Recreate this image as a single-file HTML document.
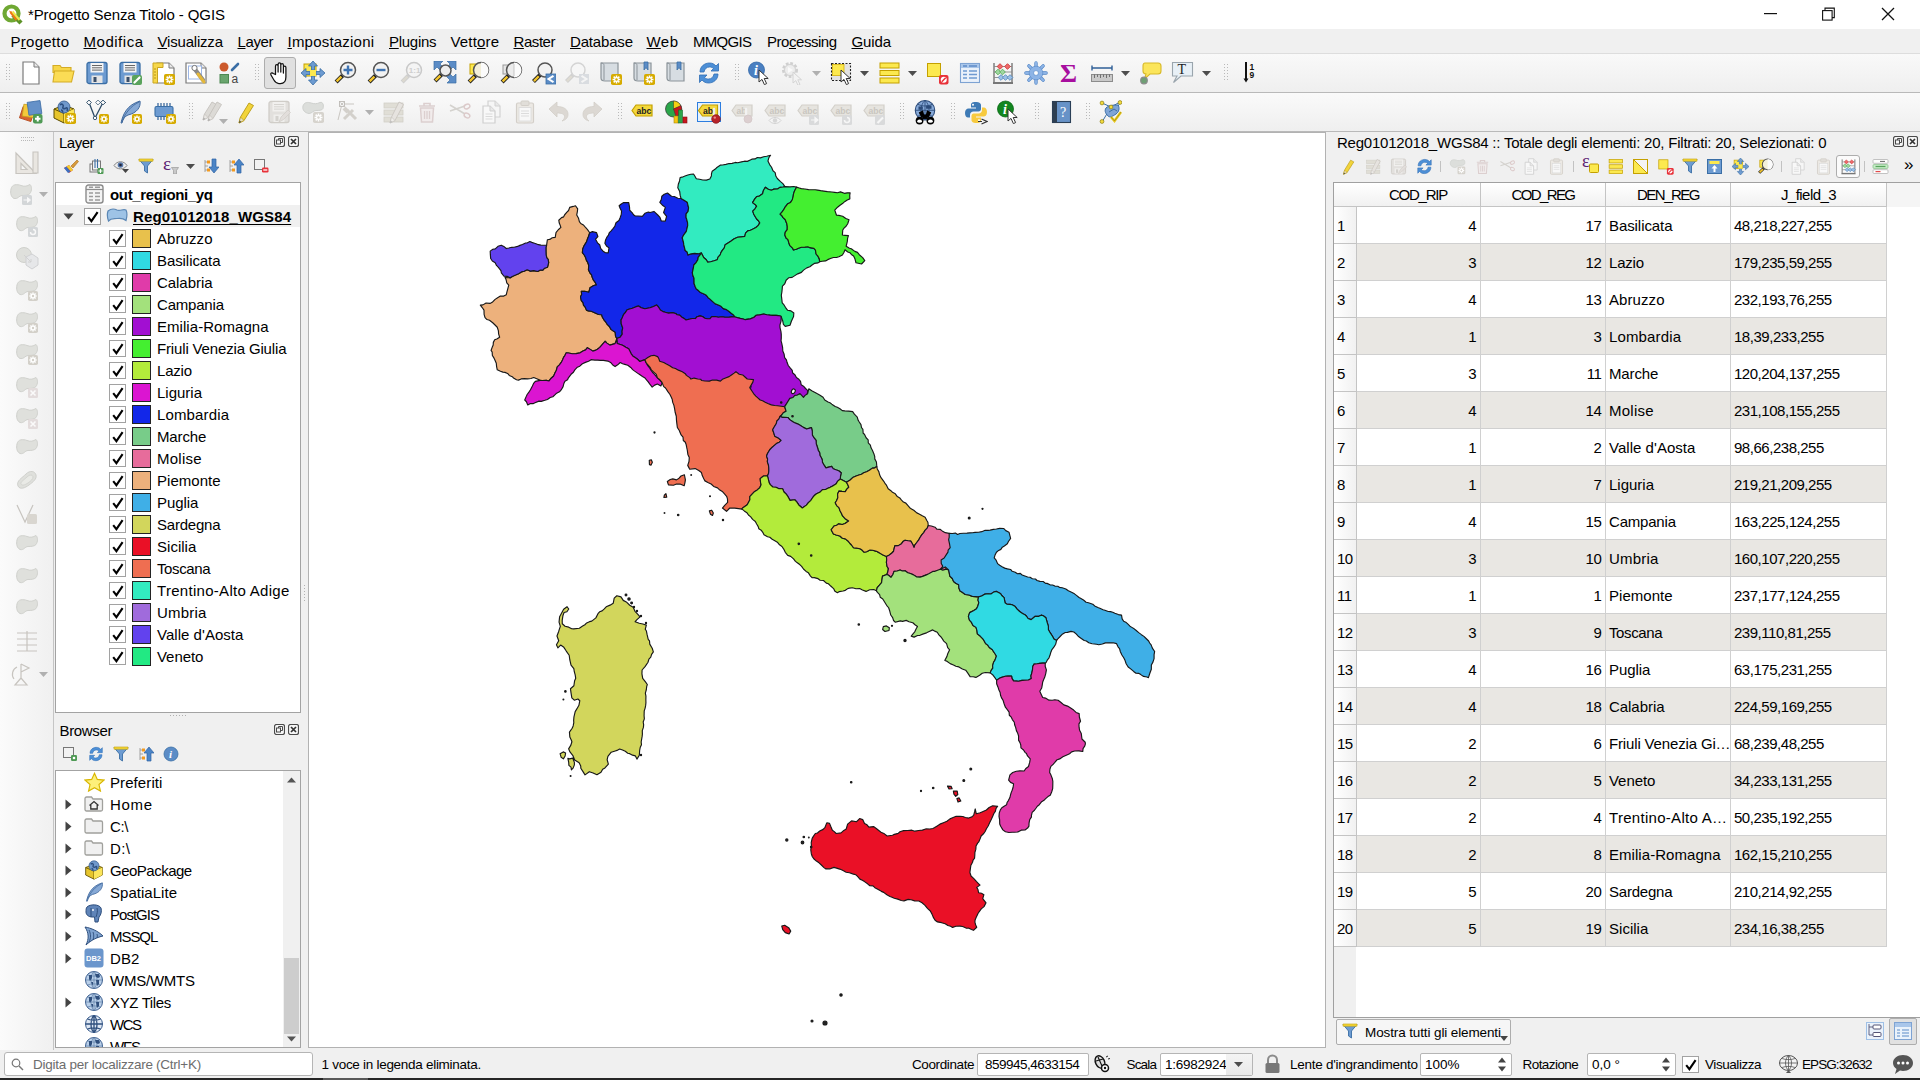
<!DOCTYPE html>
<html><head><meta charset="utf-8"><title>*Progetto Senza Titolo - QGIS</title>
<style>
*{box-sizing:border-box;margin:0;padding:0}
html,body{width:1920px;height:1080px;overflow:hidden;background:#f0f0f0;font-family:"Liberation Sans", sans-serif;font-size:15px;color:#000}
.a{position:absolute}
.t{position:absolute;white-space:nowrap;line-height:1}
#title{left:0;top:0;width:1920px;height:29px;background:#fff}
#menubar{left:0;top:29px;width:1920px;height:24px;background:#f0f0f0}
#menubar span{position:absolute;top:4px;font-size:15px;line-height:17px;white-space:nowrap}
#menubar u{text-decoration:underline;text-underline-offset:1px}
.hl{position:absolute;height:1px;background:#c9c9c9}
.vl{position:absolute;width:1px;background:#c9c9c9}
.tree{position:absolute;background:#fff;border:1px solid #a3a3a3}
.lrow{position:absolute;left:1px;height:22px;width:244px;}
.cb{position:absolute;width:17px;height:17px;border:1px solid #a2a2a2;background:#fff}
.cb svg{position:absolute;left:0.5px;top:0.5px}
.sw{position:absolute;width:19px;height:19px;border:1px solid #232323}
.lt{position:absolute;top:1px;font-size:15px;line-height:22px;white-space:nowrap}
.th{position:absolute;top:0;height:24px;font-size:15px;line-height:24px;text-align:center;border-right:1px solid #c4c4c4;border-bottom:1px solid #c4c4c4;background:linear-gradient(#fff,#f1f1f1)}
.tr{position:absolute;left:0;height:37px;width:553px}
.tr div{position:absolute;top:0;height:37px;font-size:15px;line-height:37px;white-space:nowrap;overflow:hidden;border-right:1px solid #d0d0d0;border-bottom:1px solid #d0d0d0}
.tr .n{left:0;width:23px;background:linear-gradient(90deg,#fff,#f1f1f1);padding-left:3px;border-right:1px solid #c4c4c4;border-bottom:1px solid #c4c4c4}
.inp{position:absolute;background:#fff;border:1px solid #b5b5b5;border-radius:2px;font-size:13.5px;line-height:20px;white-space:nowrap}
.sb{font-size:13.5px}
</style></head><body>
<div id="title" class="a"><svg class="a" style="left:2px;top:4px" width="21" height="21" viewBox="0 0 21 21"><circle cx="9.500" cy="9.500" r="7" fill="none" stroke="#6fa833" stroke-width="4.200"/><path d="M11 11l8 8" stroke="#5c9227" stroke-width="4.500"/><path d="M8.500 8l6 8" stroke="#ee7913" stroke-width="2.200"/><path d="M10.500 7.500l7 8.500" stroke="#f0e64a" stroke-width="2"/><path d="M7 6.500l3 1.500-1.500 1.500z" fill="#ee7913"/></svg><span class="t" style="left:28px;top:6px;font-size:15px;line-height:17px;letter-spacing:-0.111px;">*Progetto Senza Titolo - QGIS</span><svg class="a" style="left:1764px;top:13px" width="13" height="2"><rect width="13" height="1.200" fill="#111"/></svg><svg class="a" style="left:1822px;top:7px" width="13" height="14" viewBox="0 0 13 14"><rect x=".600" y="3.600" width="9.500" height="9.500" fill="none" stroke="#111" stroke-width="1.100"/><path d="M3 3.500V1.100h9.300v9.500H10" fill="none" stroke="#111" stroke-width="1.100"/></svg><svg class="a" style="left:1881px;top:7px" width="14" height="14" viewBox="0 0 14 14"><path d="M1 1l12 12M13 1L1 13" stroke="#111" stroke-width="1.300"/></svg></div>
<div id="menubar" class="a"><span style="left:10.5px;letter-spacing:0.257px">P<u>r</u>ogetto</span><span style="left:83.5px;letter-spacing:0.521px"><u>M</u>odifica</span><span style="left:157.5px;letter-spacing:-0.195px"><u>V</u>isualizza</span><span style="left:237.5px;letter-spacing:-0.38px"><u>L</u>ayer</span><span style="left:287.5px;letter-spacing:0.209px"><u>I</u>mpostazioni</span><span style="left:389px;letter-spacing:-0.283px"><u>P</u>lugins</span><span style="left:450.5px;letter-spacing:0.161px">Vett<u>o</u>re</span><span style="left:513.5px;letter-spacing:-0.436px"><u>R</u>aster</span><span style="left:570px;letter-spacing:-0.173px"><u>D</u>atabase</span><span style="left:646.5px;letter-spacing:0.464px"><u>W</u>eb</span><span style="left:693px;letter-spacing:-0.699px">MMQGIS</span><span style="left:767px;letter-spacing:-0.467px">Pro<u>c</u>essing</span><span style="left:851.5px;letter-spacing:-0.132px"><u>G</u>uida</span></div>
<!-- toolbars -->
<div class="a" style="left:0;top:53px;width:1920px;height:40px;background:linear-gradient(#f9f9f9,#efefef);border-top:1px solid #dddddd;border-bottom:1px solid #b9b9b9"></div>
<div class="a" style="left:0;top:93px;width:1920px;height:39px;background:linear-gradient(#fafafa,#efefef);border-bottom:1px solid #b9b9b9"></div>
<svg class="a" style="left:6px;top:64px" width="5" height="18"><rect x="0" y="0" width="1" height="1" fill="#b9b9b9"/><rect x="3" y="0" width="1" height="1" fill="#b9b9b9"/><rect x="0" y="3" width="1" height="1" fill="#b9b9b9"/><rect x="3" y="3" width="1" height="1" fill="#b9b9b9"/><rect x="0" y="6" width="1" height="1" fill="#b9b9b9"/><rect x="3" y="6" width="1" height="1" fill="#b9b9b9"/><rect x="0" y="9" width="1" height="1" fill="#b9b9b9"/><rect x="3" y="9" width="1" height="1" fill="#b9b9b9"/><rect x="0" y="12" width="1" height="1" fill="#b9b9b9"/><rect x="3" y="12" width="1" height="1" fill="#b9b9b9"/><rect x="0" y="15" width="1" height="1" fill="#b9b9b9"/><rect x="3" y="15" width="1" height="1" fill="#b9b9b9"/></svg>
<svg class="a" style="left:6px;top:103px" width="5" height="18"><rect x="0" y="0" width="1" height="1" fill="#b9b9b9"/><rect x="3" y="0" width="1" height="1" fill="#b9b9b9"/><rect x="0" y="3" width="1" height="1" fill="#b9b9b9"/><rect x="3" y="3" width="1" height="1" fill="#b9b9b9"/><rect x="0" y="6" width="1" height="1" fill="#b9b9b9"/><rect x="3" y="6" width="1" height="1" fill="#b9b9b9"/><rect x="0" y="9" width="1" height="1" fill="#b9b9b9"/><rect x="3" y="9" width="1" height="1" fill="#b9b9b9"/><rect x="0" y="12" width="1" height="1" fill="#b9b9b9"/><rect x="3" y="12" width="1" height="1" fill="#b9b9b9"/><rect x="0" y="15" width="1" height="1" fill="#b9b9b9"/><rect x="3" y="15" width="1" height="1" fill="#b9b9b9"/></svg>
<svg class="a" style="left:19px;top:61px" width="24" height="24" viewBox="0 0 24 24"><path d="M4 1h11l5 5v17h-16z" fill="#fff" stroke="#7b7b7b" stroke-width="1.2"/><path d="M15 1v5h5" fill="#e8e8e8" stroke="#7b7b7b" stroke-width="1"/></svg>
<svg class="a" style="left:51px;top:61px" width="24" height="24" viewBox="0 0 24 24"><path d="M2 4.5h7l1.5 2H20v5H2z" fill="#f7d648" stroke="#d4ac25" stroke-width="1.1"/><path d="M3.5 10h19.5l-2.5 11H2z" fill="#fbdc55" stroke="#d4ac25" stroke-width="1.1"/></svg>
<svg class="a" style="left:85px;top:61px" width="24" height="24" viewBox="0 0 24 24"><rect x="2" y="1.5" width="20" height="21" rx="2" fill="#6d9bd1" stroke="#3a6ea5" stroke-width="1.3"/><rect x="5.5" y="2" width="13" height="9.5" fill="#f4f4f4"/><path d="M7 4.5h10M7 6.8h10M7 9.1h10" stroke="#666" stroke-width="1"/><rect x="6.5" y="14.5" width="11" height="7.5" fill="#e4e4e4"/><rect x="8.5" y="16" width="3" height="5" fill="#3a4f6a"/></svg>
<svg class="a" style="left:118px;top:61px" width="24" height="24" viewBox="0 0 24 24"><rect x="2" y="1.5" width="20" height="21" rx="2" fill="#6d9bd1" stroke="#3a6ea5" stroke-width="1.3"/><rect x="5.5" y="2" width="13" height="9.5" fill="#f4f4f4"/><path d="M7 4.5h10M7 6.8h10M7 9.1h10" stroke="#666" stroke-width="1"/><rect x="6.5" y="14.5" width="11" height="7.5" fill="#e4e4e4"/><rect x="8.5" y="16" width="3" height="5" fill="#3a4f6a"/><rect x="14" y="14" width="10" height="10" rx="2" fill="#5aa35c"/><path d="M16.5 21.5l5-5" stroke="#fff" stroke-width="2.2" stroke-linecap="round"/></svg>
<svg class="a" style="left:151px;top:61px" width="24" height="24" viewBox="0 0 24 24"><path d="M6 2h12l5 5v15h-17z" fill="#fff" stroke="#7b7b7b" stroke-width="1.2"/><path d="M18 2v5h5" fill="#e8e8e8" stroke="#7b7b7b" stroke-width="1"/><path d="M2 2h10v4.5H6.5V22H2z" fill="#f7d84a" stroke="#c9a51e" stroke-width="1"/><path d="M3 8h2M3 11h2M3 14h2M3 17h2" stroke="#a8860f" stroke-width=".8"/><rect x="13" y="13" width="11" height="11" rx="1.8" fill="#d6ab00"/><path d="M14.54 18.5H22.46M18.5 14.54V22.46M15.6488 15.6488L21.3512 21.3512M21.3512 15.6488L15.6488 21.3512" stroke="#fff" stroke-width="1.5"/><circle cx="18.5" cy="18.5" r="1.2" fill="#d6ab00"/></svg>
<svg class="a" style="left:184px;top:61px" width="24" height="24" viewBox="0 0 24 24"><path d="M2 2h15l5 5v15h-20z" fill="#fff" stroke="#7b7b7b" stroke-width="1.2"/><path d="M17 2v5h5" fill="#e8e8e8" stroke="#7b7b7b" stroke-width="1"/><rect x="4.5" y="5" width="13" height="13" fill="#fff" stroke="#9cb6e6" stroke-width="1"/><path d="M10 7l9 12" stroke="#8a8a8a" stroke-width="4.2" stroke-linecap="round"/><path d="M14 13l6 8" stroke="#e4b83a" stroke-width="3" stroke-linecap="round"/><circle cx="10.5" cy="7" r="2.6" fill="#fff" stroke="#777" stroke-width="1"/></svg>
<svg class="a" style="left:217px;top:61px" width="24" height="24" viewBox="0 0 24 24"><circle cx="7" cy="6" r="4.5" fill="#cc5a2c"/><rect x="3" y="13.5" width="8.5" height="8.5" fill="#6aa56e" stroke="#4d8852" stroke-width="1"/><path d="M15 9l6-6" stroke="#3a6ea5" stroke-width="2.6" stroke-linecap="round"/><text x="14.5" y="22" font-family="Liberation Sans,sans-serif" font-size="12" fill="#444">a</text></svg>
<svg class="a" style="left:255px;top:64px" width="5" height="18"><rect x="0" y="0" width="1" height="1" fill="#b9b9b9"/><rect x="3" y="0" width="1" height="1" fill="#b9b9b9"/><rect x="0" y="3" width="1" height="1" fill="#b9b9b9"/><rect x="3" y="3" width="1" height="1" fill="#b9b9b9"/><rect x="0" y="6" width="1" height="1" fill="#b9b9b9"/><rect x="3" y="6" width="1" height="1" fill="#b9b9b9"/><rect x="0" y="9" width="1" height="1" fill="#b9b9b9"/><rect x="3" y="9" width="1" height="1" fill="#b9b9b9"/><rect x="0" y="12" width="1" height="1" fill="#b9b9b9"/><rect x="3" y="12" width="1" height="1" fill="#b9b9b9"/><rect x="0" y="15" width="1" height="1" fill="#b9b9b9"/><rect x="3" y="15" width="1" height="1" fill="#b9b9b9"/></svg>
<div class="a" style="left:264px;top:57px;width:32px;height:32px;background:#e0e0e0;border:1px solid #adadad;border-radius:3px"></div>
<svg class="a" style="left:268px;top:61px" width="24" height="24" viewBox="0 0 24 24"><path d="M7.5 13.5V5.2c0-2 2.6-2 2.6 0V11 3.4c0-2 2.7-2 2.7 0V11 4.2c0-2 2.6-2 2.6 0V12 6.5c0-1.9 2.5-1.9 2.5 0v9.5c0 3.5-1.800 6.500-5.500 6.500h-1.500c-2.600 0-3.800-1.500-5-3.500L3 14c-1-1.700 1-2.900 2.200-1.500z" fill="#fff" stroke="#111" stroke-width="1.25" stroke-linejoin="round"/></svg>
<svg class="a" style="left:301px;top:61px" width="24" height="24" viewBox="0 0 24 24"><rect x="3" y="3" width="12" height="12" fill="#fce94f" stroke="#c4a000"/><path d="M12 0l4.5 5h-3v4h-3V5h-3zM12 24l4.500-5h-3v-4h-3v4h-3zM0 12l5-4.500v3h4v3H5v3zM24 12l-5-4.500v3h-4v3h4v3z" fill="#6d9bd1" stroke="#3a6ea5" stroke-width=".8"/><rect x="9" y="9" width="6" height="6" fill="#fce94f"/></svg>
<svg class="a" style="left:334px;top:61px" width="24" height="24" viewBox="0 0 24 24"><path d="M8.600000000000001 14.399999999999999L2.1000000000000014 20.9" stroke="#222" stroke-width="4.2" stroke-linecap="butt"/><path d="M7.400000000000001 15.599999999999998L2.6000000000000014 20.4" stroke="#f3c52d" stroke-width="2.4"/><circle cx="14" cy="9" r="7.5" fill="#f2f2f2" stroke="#555" stroke-width="1.5"/><path d="M9.500 9h9M14 4.500v9" stroke="#3f74b3" stroke-width="2.4"/></svg>
<svg class="a" style="left:367px;top:61px" width="24" height="24" viewBox="0 0 24 24"><path d="M8.600000000000001 14.399999999999999L2.1000000000000014 20.9" stroke="#222" stroke-width="4.2" stroke-linecap="butt"/><path d="M7.400000000000001 15.599999999999998L2.6000000000000014 20.4" stroke="#f3c52d" stroke-width="2.4"/><circle cx="14" cy="9" r="7.5" fill="#f2f2f2" stroke="#555" stroke-width="1.5"/><path d="M9.500 9h9" stroke="#3f74b3" stroke-width="2.4"/></svg>
<svg class="a" style="left:400px;top:61px" width="24" height="24" viewBox="0 0 24 24"><path d="M8.600000000000001 14.399999999999999L2.1000000000000014 20.9" stroke="#cfcfcf" stroke-width="4.2" stroke-linecap="butt"/><path d="M7.400000000000001 15.599999999999998L2.6000000000000014 20.4" stroke="#dcd9d0" stroke-width="2.4"/><circle cx="14" cy="9" r="7.5" fill="#f4f4f4" stroke="#c9c9c9" stroke-width="1.5"/><text x="8.800" y="12" font-family="Liberation Sans,sans-serif" font-weight="bold" font-size="8" fill="#cfcfcf">1:1</text></svg>
<svg class="a" style="left:433px;top:61px" width="24" height="24" viewBox="0 0 24 24"><path d="M10 0H1v9l3-3 3.500 3.500 3-3L7 3zM14 0h9v9l-3-3-3.500 3.500-3-3L17 3zM23 13v9h-9l3-3-3.500-3.500 3-3L20 16z" fill="#5b8cc6" stroke="#3a6ea5" stroke-width=".7"/><path d="M8.54 13.46L2.039999999999999 19.96" stroke="#222" stroke-width="4.2" stroke-linecap="butt"/><path d="M7.339999999999999 14.66L2.539999999999999 19.46" stroke="#f3c52d" stroke-width="2.4"/><circle cx="12.5" cy="9.5" r="5.5" fill="#ededed" stroke="#555" stroke-width="1.5"/></svg>
<svg class="a" style="left:466px;top:61px" width="24" height="24" viewBox="0 0 24 24"><rect x="4" y="3" width="9" height="10" fill="#fce94f" stroke="#c4a000"/><path d="M9.600000000000001 14.399999999999999L3.1000000000000014 20.9" stroke="#222" stroke-width="4.2" stroke-linecap="butt"/><path d="M8.400000000000002 15.599999999999998L3.6000000000000014 20.4" stroke="#f3c52d" stroke-width="2.4"/><circle cx="15" cy="9" r="7.5" fill="#f3efd9" stroke="#555" stroke-width="1.5"/><path d="M15 1.500a7.500 7.500 0 0 1 0 15z" fill="#fbfbfb"/></svg>
<svg class="a" style="left:499px;top:61px" width="24" height="24" viewBox="0 0 24 24"><rect x="4" y="4" width="9" height="9" fill="#e6e6e6" stroke="#999"/><path d="M9.600000000000001 14.399999999999999L3.1000000000000014 20.9" stroke="#222" stroke-width="4.2" stroke-linecap="butt"/><path d="M8.400000000000002 15.599999999999998L3.6000000000000014 20.4" stroke="#f3c52d" stroke-width="2.4"/><circle cx="15" cy="9" r="7.5" fill="#ececec" stroke="#555" stroke-width="1.5"/><path d="M15 1.500a7.500 7.500 0 0 1 0 15z" fill="#fbfbfb"/><path d="M15 3v12" stroke="#bbb" stroke-width=".8"/></svg>
<svg class="a" style="left:532px;top:61px" width="24" height="24" viewBox="0 0 24 24"><path d="M7.96 14.04L1.46 20.54" stroke="#222" stroke-width="4.2" stroke-linecap="butt"/><path d="M6.76 15.239999999999998L1.96 20.04" stroke="#f3c52d" stroke-width="2.4"/><circle cx="13" cy="9" r="7" fill="#f2f2f2" stroke="#555" stroke-width="1.5"/><rect x="14" y="13" width="10" height="10" fill="#5b8cc6" stroke="#3a6ea5" stroke-width=".8"/><path d="M21.500 14.800l-5 3.200 5 3.200" fill="none" stroke="#fff" stroke-width="2"/></svg>
<svg class="a" style="left:565px;top:61px" width="24" height="24" viewBox="0 0 24 24"><path d="M7.96 14.04L1.46 20.54" stroke="#d0d0d0" stroke-width="4.2" stroke-linecap="butt"/><path d="M6.76 15.239999999999998L1.96 20.04" stroke="#dedbd2" stroke-width="2.4"/><circle cx="13" cy="9" r="7" fill="#f6f6f6" stroke="#d4d4d4" stroke-width="1.5"/><rect x="14" y="13" width="10" height="10" fill="#d9dce0"/><path d="M16.500 14.800l5 3.200-5 3.200" fill="none" stroke="#f4f4f4" stroke-width="2"/></svg>
<svg class="a" style="left:598px;top:61px" width="24" height="24" viewBox="0 0 24 24"><path d="M3 2h17v18H7c-2.5 0-4-1-4-3z" fill="#d7dde2" stroke="#8b9399" stroke-width="1.2"/><path d="M3 2c2 0 3 .8 3 2.5V19" fill="none" stroke="#8b9399" stroke-width="1"/><rect x="13" y="13" width="11" height="11" rx="1.8" fill="#d6ab00"/><path d="M14.54 18.5H22.46M18.5 14.54V22.46M15.6488 15.6488L21.3512 21.3512M21.3512 15.6488L15.6488 21.3512" stroke="#fff" stroke-width="1.5"/><circle cx="18.5" cy="18.5" r="1.2" fill="#d6ab00"/></svg>
<svg class="a" style="left:631px;top:61px" width="24" height="24" viewBox="0 0 24 24"><path d="M3 2h17v18H7c-2.5 0-4-1-4-3z" fill="#d7dde2" stroke="#8b9399" stroke-width="1.2"/><path d="M3 2c2 0 3 .8 3 2.5V19" fill="none" stroke="#8b9399" stroke-width="1"/><path d="M13 1h4v8l-2-2.500-2 2.500z" fill="#5b8cc6" stroke="#3a6ea5" stroke-width=".8"/><rect x="13" y="13" width="11" height="11" rx="1.8" fill="#d6ab00"/><path d="M14.54 18.5H22.46M18.5 14.54V22.46M15.6488 15.6488L21.3512 21.3512M21.3512 15.6488L15.6488 21.3512" stroke="#fff" stroke-width="1.5"/><circle cx="18.5" cy="18.5" r="1.2" fill="#d6ab00"/></svg>
<svg class="a" style="left:664px;top:61px" width="24" height="24" viewBox="0 0 24 24"><path d="M3 2h17v18H7c-2.5 0-4-1-4-3z" fill="#d7dde2" stroke="#8b9399" stroke-width="1.2"/><path d="M3 2c2 0 3 .8 3 2.5V19" fill="none" stroke="#8b9399" stroke-width="1"/><path d="M13 1h4v8l-2-2.500-2 2.500z" fill="#5b8cc6" stroke="#3a6ea5" stroke-width=".8"/></svg>
<svg class="a" style="left:697px;top:61px" width="24" height="24" viewBox="0 0 24 24"><path d="M3 11C3 5 8 2 12.500 2c3 0 5 1.300 6.500 3l2.500-2.500V10h-7.500l2.500-2.500C15.500 6.500 14 6 12.500 6 9.500 6 7.500 8 7 11z" fill="#4d8fd6" stroke="#2f6db5" stroke-width=".8"/><path d="M21 13c0 6-5 9-9.500 9-3 0-5-1.300-6.500-3L2.500 21.500V14H10l-2.500 2.500C8.500 17.500 10 18 11.500 18c3 0 5-2 5.500-5z" fill="#4d8fd6" stroke="#2f6db5" stroke-width=".8"/></svg>
<svg class="a" style="left:735px;top:64px" width="5" height="18"><rect x="0" y="0" width="1" height="1" fill="#b9b9b9"/><rect x="3" y="0" width="1" height="1" fill="#b9b9b9"/><rect x="0" y="3" width="1" height="1" fill="#b9b9b9"/><rect x="3" y="3" width="1" height="1" fill="#b9b9b9"/><rect x="0" y="6" width="1" height="1" fill="#b9b9b9"/><rect x="3" y="6" width="1" height="1" fill="#b9b9b9"/><rect x="0" y="9" width="1" height="1" fill="#b9b9b9"/><rect x="3" y="9" width="1" height="1" fill="#b9b9b9"/><rect x="0" y="12" width="1" height="1" fill="#b9b9b9"/><rect x="3" y="12" width="1" height="1" fill="#b9b9b9"/><rect x="0" y="15" width="1" height="1" fill="#b9b9b9"/><rect x="3" y="15" width="1" height="1" fill="#b9b9b9"/></svg>
<svg class="a" style="left:747px;top:61px" width="24" height="24" viewBox="0 0 24 24"><circle cx="9.500" cy="9" r="8" fill="#4a7fc1" stroke="#356aa8" stroke-width=".8"/><text x="7" y="14" font-family="Liberation Serif,serif" font-style="italic" font-weight="bold" font-size="14" fill="#fff">i</text><path transform="translate(12,9) scale(1.0)" d="M0 0v12l3-2.6 2.4 5.2 2.2-1-2.4-5.1h4z" fill="#fff" stroke="#333" stroke-width="1"/></svg>
<svg class="a" style="left:780px;top:61px" width="24" height="24" viewBox="0 0 24 24"><circle cx="10" cy="9" r="6.500" fill="#e9e9e9" stroke="#cfcfcf" stroke-width="3" stroke-dasharray="2.600 1.700"/><circle cx="10" cy="9" r="5.500" fill="#ededed" stroke="#d2d2d2"/><path d="M8 6l5 3-5 3z" fill="#fafafa"/><path transform="translate(13,11)" d="M0 0v11l2.800-2.400 2.200 4.800 2-.900-2.200-4.700h3.700z" fill="#f3f3f3" stroke="#d4d4d4" stroke-width="1"/></svg>
<svg class="a" style="left:829px;top:61px" width="24" height="24" viewBox="0 0 24 24"><rect x="2.500" y="2.500" width="19" height="17" fill="#e3e3e3" stroke="#222" stroke-width="1.100" stroke-dasharray="2 1.500"/><rect x="3.500" y="3.500" width="11.500" height="11" fill="#fce94f" stroke="#d4b106" stroke-width=".8"/><path transform="translate(12,9) scale(1.0)" d="M0 0v12l3-2.6 2.4 5.2 2.2-1-2.4-5.1h4z" fill="#fff" stroke="#333" stroke-width="1"/></svg>
<svg class="a" style="left:877px;top:61px" width="24" height="24" viewBox="0 0 24 24"><rect x="3" y="2" width="19" height="5" fill="#fce94f" stroke="#c4a000"/><rect x="3" y="9.500" width="19" height="5" fill="#fce94f" stroke="#c4a000"/><rect x="3" y="17" width="19" height="5" fill="#fce94f" stroke="#c4a000"/></svg>
<svg class="a" style="left:925px;top:61px" width="24" height="24" viewBox="0 0 24 24"><rect x="2.500" y="2.500" width="13" height="13" fill="#fce94f" stroke="#c4a000"/><rect x="14" y="14" width="9.500" height="9.500" rx="2" fill="#e8323a"/><circle cx="18.750" cy="18.750" r="3" fill="#fff"/><path d="M16.800 20.700l3.900-3.900" stroke="#e8323a" stroke-width="1.500"/></svg>
<svg class="a" style="left:958px;top:61px" width="24" height="24" viewBox="0 0 24 24"><rect x="2.500" y="2.500" width="19" height="19" fill="#eaf1fa" stroke="#7ea3d3" stroke-width="1.100"/><rect x="3" y="3" width="18" height="4" fill="#a9c6ea"/><path d="M5 5h4M11 5h8" stroke="#5d8bc7" stroke-width="1.300"/><path d="M5 10h4M11 10h8M5 13.500h4M11 13.500h8M5 17h4M11 17h8" stroke="#6f9ad1" stroke-width="1.300"/></svg>
<svg class="a" style="left:991px;top:61px" width="24" height="24" viewBox="0 0 24 24"><path d="M3 2v19M21 2v19" stroke="#777" stroke-width="1.400"/><path d="M2 22h20" stroke="#777" stroke-width="2"/><path d="M3 5.500h18M3 11h18M3 16.500h18" stroke="#888" stroke-width=".9"/><rect x="7" y="3.5" width="4" height="4" transform="rotate(45 9 5.5)" fill="#ee6a6a" stroke="#c33" stroke-width=".8"/><rect x="14.5" y="3.5" width="4" height="4" transform="rotate(45 16.5 5.5)" fill="#ee6a6a" stroke="#c33" stroke-width=".8"/><rect x="5" y="9" width="4" height="4" transform="rotate(45 7 11)" fill="#9fd7a0" stroke="#5a5" stroke-width=".8"/><rect x="9.5" y="9" width="4" height="4" transform="rotate(45 11.5 11)" fill="#9fd7a0" stroke="#5a5" stroke-width=".8"/><rect x="8" y="14.5" width="4" height="4" transform="rotate(45 10 16.5)" fill="#9cc0e6" stroke="#58b" stroke-width=".8"/><rect x="12.5" y="14.5" width="4" height="4" transform="rotate(45 14.5 16.5)" fill="#9cc0e6" stroke="#58b" stroke-width=".8"/><rect x="17" y="14.5" width="4" height="4" transform="rotate(45 19 16.5)" fill="#9cc0e6" stroke="#58b" stroke-width=".8"/></svg>
<svg class="a" style="left:1024px;top:61px" width="24" height="24" viewBox="0 0 24 24"><path d="M18.05 12.00L22.12 12.00" stroke="#4f83c4" stroke-width="3.30" stroke-linecap="round"/><path d="M16.28 16.28L19.16 19.16" stroke="#4f83c4" stroke-width="3.30" stroke-linecap="round"/><path d="M12.00 18.05L12.00 22.12" stroke="#4f83c4" stroke-width="3.30" stroke-linecap="round"/><path d="M7.72 16.28L4.84 19.16" stroke="#4f83c4" stroke-width="3.30" stroke-linecap="round"/><path d="M5.95 12.00L1.88 12.00" stroke="#4f83c4" stroke-width="3.30" stroke-linecap="round"/><path d="M7.72 7.72L4.84 4.84" stroke="#4f83c4" stroke-width="3.30" stroke-linecap="round"/><path d="M12.00 5.95L12.00 1.88" stroke="#4f83c4" stroke-width="3.30" stroke-linecap="round"/><path d="M16.28 7.72L19.16 4.84" stroke="#4f83c4" stroke-width="3.30" stroke-linecap="round"/><path d="M18.05 12.00L22.12 12.00" stroke="#8db4e6" stroke-width="2.10" stroke-linecap="round"/><path d="M16.28 16.28L19.16 19.16" stroke="#8db4e6" stroke-width="2.10" stroke-linecap="round"/><path d="M12.00 18.05L12.00 22.12" stroke="#8db4e6" stroke-width="2.10" stroke-linecap="round"/><path d="M7.72 16.28L4.84 19.16" stroke="#8db4e6" stroke-width="2.10" stroke-linecap="round"/><path d="M5.95 12.00L1.88 12.00" stroke="#8db4e6" stroke-width="2.10" stroke-linecap="round"/><path d="M7.72 7.72L4.84 4.84" stroke="#8db4e6" stroke-width="2.10" stroke-linecap="round"/><path d="M12.00 5.95L12.00 1.88" stroke="#8db4e6" stroke-width="2.10" stroke-linecap="round"/><path d="M16.28 7.72L19.16 4.84" stroke="#8db4e6" stroke-width="2.10" stroke-linecap="round"/><circle cx="12" cy="12" r="6.82" fill="#8db4e6" stroke="#4f83c4" stroke-width=".6"/><circle cx="12" cy="12" r="6.22" fill="#8db4e6"/><circle cx="12" cy="12" r="2.42" fill="#fff" stroke="#4f83c4" stroke-width=".6"/></svg>
<svg class="a" style="left:1057px;top:61px" width="24" height="24" viewBox="0 0 24 24"><text x="3" y="21" font-family="Liberation Serif,serif" font-weight="bold" font-size="26" fill="#a70e9e">Σ</text></svg>
<svg class="a" style="left:1090px;top:61px" width="24" height="24" viewBox="0 0 24 24"><path d="M2 7h20M2 4.500v5M22 4.500v5" stroke="#2f5f97" stroke-width="1.400"/><rect x="1.500" y="13.500" width="21" height="7" fill="#c9c9c9" stroke="#8c8c8c"/><path d="M4.500 13.500v3.500M7.500 13.500v2.500M10.500 13.500v3.500M13.500 13.500v2.500M16.500 13.500v3.500M19.500 13.500v2.500" stroke="#666" stroke-width=".9"/></svg>
<svg class="a" style="left:1138px;top:61px" width="24" height="24" viewBox="0 0 24 24"><path d="M7 2h13c2 0 3 1 3 3v5c0 2-1 3-3 3h-8l-5.500 5 1.500-5c-2-.200-3-1.200-3-3V5c0-2 1-3 2-3z" fill="#fbe55b" stroke="#d8b928" stroke-width="1.100"/><circle cx="6" cy="19.500" r="3.300" fill="#6e9f74" stroke="#8b8b8b" stroke-width="1.200"/></svg>
<svg class="a" style="left:1171px;top:61px" width="24" height="24" viewBox="0 0 24 24"><path d="M1.500 1.500h20v13.500H10L2.500 21.500 6 15H1.500z" fill="#e8f0f6" stroke="#9aa5ad" stroke-width="1.100"/><text x="6.500" y="12.800" font-family="Liberation Serif,serif" font-size="14" fill="#222">T</text></svg>
<svg class="a" style="left:811.5px;top:71px" width="9" height="5" viewBox="0 0 9 5"><path d="M0 0h9L4.500 5z" fill="#b0b0b0"/></svg>
<svg class="a" style="left:859.5px;top:71px" width="9" height="5" viewBox="0 0 9 5"><path d="M0 0h9L4.500 5z" fill="#4d4d4d"/></svg>
<svg class="a" style="left:907.5px;top:71px" width="9" height="5" viewBox="0 0 9 5"><path d="M0 0h9L4.500 5z" fill="#4d4d4d"/></svg>
<svg class="a" style="left:1120.5px;top:71px" width="9" height="5" viewBox="0 0 9 5"><path d="M0 0h9L4.500 5z" fill="#4d4d4d"/></svg>
<svg class="a" style="left:1201.5px;top:71px" width="9" height="5" viewBox="0 0 9 5"><path d="M0 0h9L4.500 5z" fill="#4d4d4d"/></svg>
<svg class="a" style="left:1224px;top:64px" width="5" height="18"><rect x="0" y="0" width="1" height="1" fill="#b9b9b9"/><rect x="3" y="0" width="1" height="1" fill="#b9b9b9"/><rect x="0" y="3" width="1" height="1" fill="#b9b9b9"/><rect x="3" y="3" width="1" height="1" fill="#b9b9b9"/><rect x="0" y="6" width="1" height="1" fill="#b9b9b9"/><rect x="3" y="6" width="1" height="1" fill="#b9b9b9"/><rect x="0" y="9" width="1" height="1" fill="#b9b9b9"/><rect x="3" y="9" width="1" height="1" fill="#b9b9b9"/><rect x="0" y="12" width="1" height="1" fill="#b9b9b9"/><rect x="3" y="12" width="1" height="1" fill="#b9b9b9"/><rect x="0" y="15" width="1" height="1" fill="#b9b9b9"/><rect x="3" y="15" width="1" height="1" fill="#b9b9b9"/></svg>
<svg class="a" style="left:1239px;top:61px" width="24" height="24" viewBox="0 0 24 24"><path d="M7 1v18" stroke="#111" stroke-width="2"/><path d="M4.500 17.500h5L7 21.500z" fill="#111"/><text x="10.500" y="9" font-family="Liberation Sans,sans-serif" font-weight="bold" font-size="8.500" fill="#111">1</text><text x="10.500" y="17" font-family="Liberation Sans,sans-serif" font-weight="bold" font-size="8.500" fill="#111">9</text></svg>
<svg class="a" style="left:19px;top:99.5px" width="24" height="24" viewBox="0 0 24 24"><rect x="2" y="8" width="12" height="12" transform="rotate(18 8 14)" fill="#d8622f" stroke="#b4481d" stroke-width=".8"/><rect x="4" y="5" width="12" height="12" transform="rotate(8 10 11)" fill="#f4c93b" stroke="#c9a01e" stroke-width=".8"/><rect x="9" y="1.500" width="13" height="13" transform="rotate(-8 15 8)" fill="#6591c8" stroke="#3f6ea6" stroke-width=".8"/><rect x="14" y="14" width="9.500" height="9.500" rx="2" fill="#4f9a55"/><path d="M16 18.750h5.500M18.750 16v5.500" stroke="#fff" stroke-width="2"/></svg>
<svg class="a" style="left:52px;top:99.5px" width="24" height="24" viewBox="0 0 24 24"><path d="M2 9l10-4 10 4v9l-10 5-10-5z" fill="#e7c52c" stroke="#5a4a00" stroke-width="1"/><path d="M2 9l10 4.500V23M12 13.500L22 9" fill="none" stroke="#5a4a00" stroke-width="1"/><path d="M12 13.500L22 9v9l-10 5z" fill="#fbe55b"/><circle cx="12" cy="7" r="6" fill="#6f98cc" stroke="#3d6292" stroke-width=".9"/><path d="M8 5c2-2 4 0 3 2s2 2 3 1 2 1 1 3M9 10c1 0 2 1 1.500 2.500" stroke="#2c4f80" stroke-width="1.600" fill="none"/><rect x="13" y="13" width="11" height="11" rx="1.8" fill="#d6ab00"/><path d="M14.54 18.5H22.46M18.5 14.54V22.46M15.6488 15.6488L21.3512 21.3512M21.3512 15.6488L15.6488 21.3512" stroke="#fff" stroke-width="1.5"/><circle cx="18.5" cy="18.5" r="1.2" fill="#d6ab00"/></svg>
<svg class="a" style="left:85px;top:99.5px" width="24" height="24" viewBox="0 0 24 24"><path d="M4 2.500l6 15.500L18 2.500" fill="none" stroke="#2b4a66" stroke-width="1.300"/><path d="M13 2.500h8" stroke="#2b4a66" stroke-width="1"/><rect x="2.300" y=".8" width="3.400" height="3.400" transform="rotate(45 4 2.500)" fill="#fff" stroke="#2b4a66" stroke-width=".9"/><rect x="16.300" y=".8" width="3.400" height="3.400" transform="rotate(45 18 2.500)" fill="#fff" stroke="#2b4a66" stroke-width=".9"/><rect x="11.300" y=".8" width="3.400" height="3.400" transform="rotate(45 13 2.500)" fill="#fff" stroke="#2b4a66" stroke-width=".7"/><circle cx="10" cy="18" r="1.700" fill="#fff" stroke="#2b4a66" stroke-width=".9"/><rect x="14" y="14" width="10" height="10" rx="1.8" fill="#d6ab00"/><path d="M15.4 19.0H22.6M19.0 15.4V22.6M16.408 16.408L21.592 21.592M21.592 16.408L16.408 21.592" stroke="#fff" stroke-width="1.5"/><circle cx="19.0" cy="19.0" r="1.2" fill="#d6ab00"/></svg>
<svg class="a" style="left:118px;top:99.5px" width="24" height="24" viewBox="0 0 24 24"><path d="M3 23C5 14 9 5 22 1c1 6-3 12-12 14-3 1-5 4-6 8z" fill="#86a9d6" stroke="#3f689c" stroke-width="1"/><path d="M4 21C8 12 13 6 21 2" fill="none" stroke="#3f689c" stroke-width=".9"/><rect x="14" y="14" width="10" height="10" rx="1.8" fill="#d6ab00"/><path d="M15.4 19.0H22.6M19.0 15.4V22.6M16.408 16.408L21.592 21.592M21.592 16.408L16.408 21.592" stroke="#fff" stroke-width="1.5"/><circle cx="19.0" cy="19.0" r="1.2" fill="#d6ab00"/></svg>
<svg class="a" style="left:152px;top:99.5px" width="24" height="24" viewBox="0 0 24 24"><path d="M6 3v17M9 3v17M12 3v17M15 3v17M18 3v17" stroke="#2f5f97" stroke-width="1.200"/><rect x="3" y="6.500" width="18" height="10" rx="1.500" fill="#6d9bd1" stroke="#3a6ea5" stroke-width="1.100"/><rect x="14" y="14" width="10" height="10" rx="1.8" fill="#d6ab00"/><path d="M15.4 19.0H22.6M19.0 15.4V22.6M16.408 16.408L21.592 21.592M21.592 16.408L16.408 21.592" stroke="#fff" stroke-width="1.5"/><circle cx="19.0" cy="19.0" r="1.2" fill="#d6ab00"/></svg>
<svg class="a" style="left:189px;top:103px" width="5" height="18"><rect x="0" y="0" width="1" height="1" fill="#b9b9b9"/><rect x="3" y="0" width="1" height="1" fill="#b9b9b9"/><rect x="0" y="3" width="1" height="1" fill="#b9b9b9"/><rect x="3" y="3" width="1" height="1" fill="#b9b9b9"/><rect x="0" y="6" width="1" height="1" fill="#b9b9b9"/><rect x="3" y="6" width="1" height="1" fill="#b9b9b9"/><rect x="0" y="9" width="1" height="1" fill="#b9b9b9"/><rect x="3" y="9" width="1" height="1" fill="#b9b9b9"/><rect x="0" y="12" width="1" height="1" fill="#b9b9b9"/><rect x="3" y="12" width="1" height="1" fill="#b9b9b9"/><rect x="0" y="15" width="1" height="1" fill="#b9b9b9"/><rect x="3" y="15" width="1" height="1" fill="#b9b9b9"/></svg>
<svg class="a" style="left:202px;top:99.5px" width="24" height="24" viewBox="0 0 24 24"><path d="M1 20L2.5 14L10 2L14.5 4.5L6 17.5z" fill="#dcdad6" stroke="#c5c2bd" stroke-width=".9"/><path d="M1 20L2.5 14L6 17.5z" fill="#e9e7e4" stroke="#c5c2bd" stroke-width=".7"/><path d="M1 20l.600-2.400 1.700 1.500z" fill="#aaa"/><path d="M6 21L7.5 15L15 2L19.5 4.5L11 18.5z" fill="#dcdad6" stroke="#c5c2bd" stroke-width=".9"/><path d="M6 21L7.5 15L11 18.5z" fill="#e9e7e4" stroke="#c5c2bd" stroke-width=".7"/><path d="M6 21l.600-2.400 1.700 1.500z" fill="#aaa"/></svg>
<svg class="a" style="left:234px;top:99.5px" width="24" height="24" viewBox="0 0 24 24"><path d="M5 23L6.5 17L15 3L19.5 5.5L10 20.5z" fill="#f2d43a" stroke="#b89a14" stroke-width=".9"/><path d="M5 23L6.5 17L10 20.5z" fill="#e8dfc0" stroke="#b89a14" stroke-width=".7"/><path d="M5 23l.600-2.400 1.700 1.500z" fill="#444"/></svg>
<svg class="a" style="left:267px;top:99.5px" width="24" height="24" viewBox="0 0 24 24"><rect x="2" y="1.5" width="20" height="21" rx="2" fill="#e2e0dd" stroke="#d0cdc8" stroke-width="1.3"/><rect x="5.5" y="2" width="13" height="9.5" fill="#f1f0ee"/><path d="M7 4.5h10M7 6.8h10M7 9.1h10" stroke="#d6d4d0" stroke-width="1"/><rect x="6.5" y="14.5" width="11" height="7.5" fill="#efeeec"/><rect x="8.5" y="16" width="3" height="5" fill="#d4d2ce"/><path d="M12 22l2-5 7-7 2.500 2.500-7 7z" fill="#e2dedb" stroke="#d2cec9" stroke-width=".8"/></svg>
<svg class="a" style="left:301px;top:99.5px" width="24" height="24" viewBox="0 0 24 24"><path d="M2 6C3 2 7 2 10 3s6 1 9-.500c3-1 4 3 3 6-1 2-4 2-7 2s-4 3-7 3C4 13 1 10 2 6z" fill="#dcdedb" stroke="#cfd1ce" stroke-width="1"/><rect x="12" y="12" width="11" height="11" rx="1.8" fill="#d6d3cd"/><path d="M13.54 17.5H21.46M17.5 13.54V21.46M14.6488 14.6488L20.3512 20.3512M20.3512 14.6488L14.6488 20.3512" stroke="#fff" stroke-width="1.5"/><circle cx="17.5" cy="17.5" r="1.2" fill="#d6d3cd"/></svg>
<svg class="a" style="left:335px;top:99.5px" width="24" height="24" viewBox="0 0 24 24"><path d="M3 20L7 4h12" fill="none" stroke="#c9c6c1" stroke-width="1"/><rect x="4.500" y="1.500" width="5" height="5" fill="#f4f4f4" stroke="#bdbab5" stroke-width=".9"/><path d="M5.500 2.500l3 3M8.500 2.500l-3 3" stroke="#bdbab5" stroke-width=".8"/><path d="M9 19l9-9M12 10l9 9" stroke="#d3d0cb" stroke-width="3"/><path d="M9 8l4 4" stroke="#d3d0cb" stroke-width="4"/></svg>
<svg class="a" style="left:382px;top:99.5px" width="24" height="24" viewBox="0 0 24 24"><rect x="2" y="3" width="19" height="5" fill="#e0ded6" stroke="#d2d0c8" stroke-width=".8"/><rect x="2" y="10" width="19" height="5" fill="#e0ded6" stroke="#d2d0c8" stroke-width=".8"/><rect x="2" y="17" width="19" height="5" fill="#e0ded6" stroke="#d2d0c8" stroke-width=".8"/><path d="M8 23L9.5 17L17 2L21.5 4.5L13 20.5z" fill="#e6e3df" stroke="#c9c5c0" stroke-width=".9"/><path d="M8 23L9.5 17L13 20.5z" fill="#efedea" stroke="#c9c5c0" stroke-width=".7"/><path d="M8 23l.600-2.400 1.700 1.500z" fill="#bbb"/></svg>
<svg class="a" style="left:415px;top:99.5px" width="24" height="24" viewBox="0 0 24 24"><path d="M4 6h16M9 6V3.500h6V6" fill="none" stroke="#dccfcf" stroke-width="1.600"/><path d="M5.500 8h13l-1 14h-11z" fill="#f1ecec" stroke="#dccfcf" stroke-width="1.500"/><path d="M9.500 11v8M12 11v8M14.500 11v8" stroke="#dccfcf" stroke-width="1.300"/></svg>
<svg class="a" style="left:448px;top:99.5px" width="24" height="24" viewBox="0 0 24 24"><path d="M2 5l15 9M2 11l15-5" stroke="#d4d2ce" stroke-width="1.600"/><ellipse cx="19" cy="6.500" rx="3" ry="2.200" transform="rotate(-25 19 6.500)" fill="none" stroke="#dccaca" stroke-width="1.400"/><ellipse cx="19" cy="15.500" rx="3" ry="2.200" transform="rotate(30 19 15.500)" fill="none" stroke="#dccaca" stroke-width="1.400"/></svg>
<svg class="a" style="left:480px;top:99.5px" width="24" height="24" viewBox="0 0 24 24"><path d="M8 1h7l5 5v11h-12z" fill="#f6f6f6" stroke="#d2d2d2" stroke-width="1.2"/><path d="M15 1v5h5" fill="#e8e8e8" stroke="#d2d2d2" stroke-width="1"/><path d="M3 6h7l5 5v12h-12z" fill="#f8f8f8" stroke="#cfcfcf" stroke-width="1.2"/><path d="M10 6v5h5" fill="#e8e8e8" stroke="#cfcfcf" stroke-width="1"/><path d="M5.500 14h7M5.500 16.500h7M5.500 19h7" stroke="#dadada" stroke-width="1"/></svg>
<svg class="a" style="left:513px;top:99.5px" width="24" height="24" viewBox="0 0 24 24"><rect x="3.500" y="3" width="17" height="20" rx="1.500" fill="#ece9e4" stroke="#d3cfc9" stroke-width="1.200"/><rect x="8" y="1" width="8" height="4.500" rx="1" fill="#e1ded9" stroke="#d3cfc9"/><rect x="6" y="7.500" width="12" height="13.500" fill="#f8f8f8" stroke="#d9d9d9" stroke-width=".8"/><path d="M8 11h8M8 13.500h8M8 16h8" stroke="#dcdcdc" stroke-width="1"/></svg>
<svg class="a" style="left:547px;top:99.5px" width="24" height="24" viewBox="0 0 24 24"><path d="M2 9l8-7v4.500c7 0 11 3 11 8 0 3-2 5.500-6 6.500 2-1.500 2.500-3 2.500-4.500 0-2.500-3-3.500-7.500-3.500V17z" fill="#dcd8d3" stroke="#d2cec8" stroke-width=".8"/></svg>
<svg class="a" style="left:580px;top:99.5px" width="24" height="24" viewBox="0 0 24 24"><path d="M22 9l-8-7v4.500c-7 0-11 3-11 8 0 3 2 5.500 6 6.500-2-1.500-2.500-3-2.500-4.500 0-2.500 3-3.500 7.500-3.500V17z" fill="#dcd8d3" stroke="#d2cec8" stroke-width=".8"/></svg>
<svg class="a" style="left:218.5px;top:119px" width="9" height="5" viewBox="0 0 9 5"><path d="M0 0h9L4.500 5z" fill="#b0b0b0"/></svg>
<svg class="a" style="left:364.5px;top:110px" width="9" height="5" viewBox="0 0 9 5"><path d="M0 0h9L4.500 5z" fill="#b0b0b0"/></svg>
<svg class="a" style="left:618px;top:103px" width="5" height="18"><rect x="0" y="0" width="1" height="1" fill="#b9b9b9"/><rect x="3" y="0" width="1" height="1" fill="#b9b9b9"/><rect x="0" y="3" width="1" height="1" fill="#b9b9b9"/><rect x="3" y="3" width="1" height="1" fill="#b9b9b9"/><rect x="0" y="6" width="1" height="1" fill="#b9b9b9"/><rect x="3" y="6" width="1" height="1" fill="#b9b9b9"/><rect x="0" y="9" width="1" height="1" fill="#b9b9b9"/><rect x="3" y="9" width="1" height="1" fill="#b9b9b9"/><rect x="0" y="12" width="1" height="1" fill="#b9b9b9"/><rect x="3" y="12" width="1" height="1" fill="#b9b9b9"/><rect x="0" y="15" width="1" height="1" fill="#b9b9b9"/><rect x="3" y="15" width="1" height="1" fill="#b9b9b9"/></svg>
<svg class="a" style="left:630px;top:101.5px" width="24" height="24" viewBox="0 0 24 24"><path d="M2 8.5l4-5.5h16v11h-16z" fill="#f4d83c" stroke="#c4a000" stroke-width="1.2"/><text x="6.5" y="11.6" font-family="Liberation Sans,sans-serif" font-weight="bold" font-size="8.6" fill="#222">abc</text></svg>
<svg class="a" style="left:664px;top:100px" width="24" height="24" viewBox="0 0 24 24"><circle cx="9.500" cy="9" r="8" fill="#2ba64a" stroke="#333" stroke-width=".7"/><path d="M9.500 9V1a8 8 0 0 1 7.500 5.500z" fill="#f5d012" stroke="#333" stroke-width=".5"/><path d="M9.500 9l7.500-3.500A8 8 0 0 1 12 16.600z" fill="#c8161d" stroke="#333" stroke-width=".5"/><rect x="10" y="16" width="4" height="7" fill="#f5c712" stroke="#a8860f" stroke-width=".6"/><rect x="14.500" y="10" width="4" height="13" fill="#2ba64a" stroke="#176b2c" stroke-width=".6"/><rect x="19" y="17" width="4" height="6" fill="#c8161d" stroke="#8a0f14" stroke-width=".6"/></svg>
<svg class="a" style="left:697px;top:101.5px" width="24" height="24" viewBox="0 0 24 24"><rect x=".500" y=".500" width="23" height="19" fill="#e5f1fb" stroke="#2d7de0" stroke-width="1"/><path d="M1.5 8.5l4-5.5h15v11h-15z" fill="#f4d83c" stroke="#c4a000" stroke-width="1.2"/><text x="6.0" y="11.6" font-family="Liberation Sans,sans-serif" font-weight="bold" font-size="8.6" fill="#222">ab</text><path d="M17 7v7" stroke="#eee" stroke-width="2.400" stroke-linecap="round"/><circle cx="19" cy="17" r="4.300" fill="#b8232a" stroke="#7d1318" stroke-width=".7"/><circle cx="17.800" cy="15.600" r="1.200" fill="#e88"/></svg>
<svg class="a" style="left:730px;top:101.5px" width="24" height="24" viewBox="0 0 24 24"><path d="M2 8.5l4-5.5h16v11h-16z" fill="#e6e4df" stroke="#d3d0ca" stroke-width="1.2"/><text x="6.5" y="11.6" font-family="Liberation Sans,sans-serif" font-weight="bold" font-size="8.6" fill="#c9c6c0">ab</text><path d="M16 7v7" stroke="#f2f2f2" stroke-width="2.400" stroke-linecap="round"/><circle cx="18" cy="17" r="4" fill="#dccfd0" stroke="#d1c5c5" stroke-width=".7"/></svg>
<svg class="a" style="left:763px;top:101.5px" width="24" height="24" viewBox="0 0 24 24"><path d="M2 8.5l4-5.5h16v11h-16z" fill="#e6e4df" stroke="#d3d0ca" stroke-width="1.2"/><text x="6.5" y="11.6" font-family="Liberation Sans,sans-serif" font-weight="bold" font-size="8.6" fill="#c9c6c0">abc</text><path d="M6 18.500c3-4 9-4 12 0-3 4-9 4-12 0z" fill="#f4f4f4" stroke="#d3d3d3"/><circle cx="12" cy="18.500" r="2.200" fill="#d6d6d6"/></svg>
<svg class="a" style="left:796px;top:101.5px" width="24" height="24" viewBox="0 0 24 24"><path d="M2 8.5l4-5.5h16v11h-16z" fill="#e6e4df" stroke="#d3d0ca" stroke-width="1.2"/><text x="6.5" y="11.6" font-family="Liberation Sans,sans-serif" font-weight="bold" font-size="8.6" fill="#c9c6c0">abc</text><rect x="13" y="13" width="10" height="10" rx="1.500" fill="#d9dadb"/><path d="M15 18h4v-2.500l3 2.500-3 2.500V18" fill="#f6f6f6" stroke="#f6f6f6" stroke-width="1.200"/></svg>
<svg class="a" style="left:829px;top:101.5px" width="24" height="24" viewBox="0 0 24 24"><path d="M2 8.5l4-5.5h16v11h-16z" fill="#e6e4df" stroke="#d3d0ca" stroke-width="1.2"/><text x="6.5" y="11.6" font-family="Liberation Sans,sans-serif" font-weight="bold" font-size="8.6" fill="#c9c6c0">abc</text><rect x="13" y="13" width="10" height="10" rx="1.500" fill="#d9dadb"/><path d="M15.500 18a2.500 2.500 0 1 0 2.500-2.500" fill="none" stroke="#f6f6f6" stroke-width="1.500"/></svg>
<svg class="a" style="left:862px;top:101.5px" width="24" height="24" viewBox="0 0 24 24"><path d="M2 8.5l4-5.5h16v11h-16z" fill="#e6e4df" stroke="#d3d0ca" stroke-width="1.2"/><text x="6.5" y="11.6" font-family="Liberation Sans,sans-serif" font-weight="bold" font-size="8.6" fill="#c9c6c0">abc</text><rect x="13" y="13" width="10" height="10" rx="1.500" fill="#d9dadb"/><path d="M15.500 21l5.500-5.500" stroke="#f6f6f6" stroke-width="2.200"/></svg>
<svg class="a" style="left:900px;top:103px" width="5" height="18"><rect x="0" y="0" width="1" height="1" fill="#b9b9b9"/><rect x="3" y="0" width="1" height="1" fill="#b9b9b9"/><rect x="0" y="3" width="1" height="1" fill="#b9b9b9"/><rect x="3" y="3" width="1" height="1" fill="#b9b9b9"/><rect x="0" y="6" width="1" height="1" fill="#b9b9b9"/><rect x="3" y="6" width="1" height="1" fill="#b9b9b9"/><rect x="0" y="9" width="1" height="1" fill="#b9b9b9"/><rect x="3" y="9" width="1" height="1" fill="#b9b9b9"/><rect x="0" y="12" width="1" height="1" fill="#b9b9b9"/><rect x="3" y="12" width="1" height="1" fill="#b9b9b9"/><rect x="0" y="15" width="1" height="1" fill="#b9b9b9"/><rect x="3" y="15" width="1" height="1" fill="#b9b9b9"/></svg>
<svg class="a" style="left:912px;top:99.5px" width="26" height="26" viewBox="0 0 24 24"><circle cx="12" cy="9.500" r="9" fill="#86a9d8" stroke="#2b4a78" stroke-width="1"/><path d="M3 9.500h18M12 .500v18M5.500 4c4 2 9 2 13 0M5.500 15c4-2 9-2 13 0M12 .500c-5 4-5 14 0 18M12 .500c5 4 5 14 0 18" fill="none" stroke="#2b4a78" stroke-width=".8"/><path d="M6 6h4v3H6zM13 5h5v3h-5z" fill="#2b4a78"/><path d="M7 13l2-1 1 4M17 13l-2-1-1 4" stroke="#000" stroke-width="3.500"/><circle cx="7" cy="19" r="3.600" fill="#000"/><circle cx="17" cy="19" r="3.600" fill="#000"/><ellipse cx="7" cy="19.600" rx="2.200" ry="1.500" fill="#fff"/><ellipse cx="17" cy="19.600" rx="2.200" ry="1.500" fill="#fff"/><rect x="9.500" y="13.500" width="5" height="4" fill="#000"/></svg>
<svg class="a" style="left:951px;top:103px" width="5" height="18"><rect x="0" y="0" width="1" height="1" fill="#b9b9b9"/><rect x="3" y="0" width="1" height="1" fill="#b9b9b9"/><rect x="0" y="3" width="1" height="1" fill="#b9b9b9"/><rect x="3" y="3" width="1" height="1" fill="#b9b9b9"/><rect x="0" y="6" width="1" height="1" fill="#b9b9b9"/><rect x="3" y="6" width="1" height="1" fill="#b9b9b9"/><rect x="0" y="9" width="1" height="1" fill="#b9b9b9"/><rect x="3" y="9" width="1" height="1" fill="#b9b9b9"/><rect x="0" y="12" width="1" height="1" fill="#b9b9b9"/><rect x="3" y="12" width="1" height="1" fill="#b9b9b9"/><rect x="0" y="15" width="1" height="1" fill="#b9b9b9"/><rect x="3" y="15" width="1" height="1" fill="#b9b9b9"/></svg>
<svg class="a" style="left:964px;top:100.5px" width="24" height="24" viewBox="0 0 24 24"><path d="M11.500 1c-4 0-4.500 1.500-4.500 3v2.500h5v1H4.500C2.500 7.500 1 9 1 12s1.500 4.500 3 4.500h2V14c0-2 1.500-3.500 3.500-3.500h5c1.500 0 2.500-1 2.500-2.500V4c0-1.500-1.500-3-5.500-3z" fill="#3e7ab5"/><circle cx="9" cy="3.700" r="1" fill="#fff"/><path d="M12.500 22c4 0 4.500-1.500 4.500-3v-2.500h-5v-1h7.500c2 0 3.500-1.500 3.500-4.500s-1.500-4.500-3-4.500h-2V9c0 2-1.500 3.500-3.500 3.500h-5C8.500 12.500 7.500 13.500 7.500 15v4c0 1.500 1 3 5 3z" fill="#f7ca3e"/><circle cx="15" cy="19.300" r="1" fill="#fff"/><path d="M17.500 18l5.500 2.500-5.500 2.500" fill="none" stroke="#333" stroke-width="1.200"/><path d="M14 20.500h4" stroke="#333" stroke-width="1"/></svg>
<svg class="a" style="left:996px;top:99.5px" width="24" height="24" viewBox="0 0 24 24"><circle cx="9.500" cy="9" r="8" fill="#12861f" stroke="#0b6a16" stroke-width=".8"/><text x="7" y="14" font-family="Liberation Serif,serif" font-style="italic" font-weight="bold" font-size="14" fill="#fff">i</text><path transform="translate(12,9) scale(1.0)" d="M0 0v12l3-2.6 2.4 5.2 2.2-1-2.4-5.1h4z" fill="#fff" stroke="#333" stroke-width="1"/></svg>
<svg class="a" style="left:1035px;top:103px" width="5" height="18"><rect x="0" y="0" width="1" height="1" fill="#b9b9b9"/><rect x="3" y="0" width="1" height="1" fill="#b9b9b9"/><rect x="0" y="3" width="1" height="1" fill="#b9b9b9"/><rect x="3" y="3" width="1" height="1" fill="#b9b9b9"/><rect x="0" y="6" width="1" height="1" fill="#b9b9b9"/><rect x="3" y="6" width="1" height="1" fill="#b9b9b9"/><rect x="0" y="9" width="1" height="1" fill="#b9b9b9"/><rect x="3" y="9" width="1" height="1" fill="#b9b9b9"/><rect x="0" y="12" width="1" height="1" fill="#b9b9b9"/><rect x="3" y="12" width="1" height="1" fill="#b9b9b9"/><rect x="0" y="15" width="1" height="1" fill="#b9b9b9"/><rect x="3" y="15" width="1" height="1" fill="#b9b9b9"/></svg>
<svg class="a" style="left:1049px;top:99.5px" width="24" height="24" viewBox="0 0 24 24"><rect x="3.500" y="1.500" width="18" height="21" fill="#6792c7" stroke="#2a3f57" stroke-width="1.100"/><rect x="3.500" y="1.500" width="4.500" height="21" fill="#2e3f52"/><text x="11" y="17" font-family="Liberation Serif,serif" font-size="14" fill="#fff">?</text></svg>
<svg class="a" style="left:1086px;top:103px" width="5" height="18"><rect x="0" y="0" width="1" height="1" fill="#b9b9b9"/><rect x="3" y="0" width="1" height="1" fill="#b9b9b9"/><rect x="0" y="3" width="1" height="1" fill="#b9b9b9"/><rect x="3" y="3" width="1" height="1" fill="#b9b9b9"/><rect x="0" y="6" width="1" height="1" fill="#b9b9b9"/><rect x="3" y="6" width="1" height="1" fill="#b9b9b9"/><rect x="0" y="9" width="1" height="1" fill="#b9b9b9"/><rect x="3" y="9" width="1" height="1" fill="#b9b9b9"/><rect x="0" y="12" width="1" height="1" fill="#b9b9b9"/><rect x="3" y="12" width="1" height="1" fill="#b9b9b9"/><rect x="0" y="15" width="1" height="1" fill="#b9b9b9"/><rect x="3" y="15" width="1" height="1" fill="#b9b9b9"/></svg>
<svg class="a" style="left:1098px;top:99.5px" width="24" height="24" viewBox="0 0 24 24"><path d="M4 3l9 4 9-5M13 7L4 22M22 2.500l-2 4" fill="none" stroke="#3a6ea5" stroke-width="1"/><path d="M8 8c3-3 8-3 12-3 2 3 1 7-2 9s-6 4-8 2-4-5-2-8z" fill="#7fa5d6" stroke="#3a6ea5" stroke-width="1"/><path d="M11 12l5-3 3 2" fill="none" stroke="#3a6ea5" stroke-width="1"/><path d="M13 17l3.500 4L23 12" fill="none" stroke="#e8c81e" stroke-width="2.600"/><path d="M13 17l3.500 4L23 12" fill="none" stroke="#8a7300" stroke-width=".5"/><circle cx="4" cy="3" r="1.900" fill="#f4dc3c" stroke="#8a7a14" stroke-width=".7"/><circle cx="13" cy="7" r="1.900" fill="#f4dc3c" stroke="#8a7a14" stroke-width=".7"/><circle cx="22" cy="2.5" r="1.900" fill="#f4dc3c" stroke="#8a7a14" stroke-width=".7"/><circle cx="4" cy="21.5" r="1.900" fill="#f4dc3c" stroke="#8a7a14" stroke-width=".7"/></svg>
<!-- left toolbar -->
<div class="a" style="left:0;top:132px;width:54px;height:918px;background:linear-gradient(90deg,#fbfbfb,#f0f0f0);border-right:1px solid #c5c5c5"></div>
<svg class="a" style="left:21px;top:137px" width="14" height="5"><rect x="0" y="0" width="1" height="1" fill="#b9b9b9"/><rect x="0" y="3" width="1" height="1" fill="#b9b9b9"/><rect x="2" y="0" width="1" height="1" fill="#b9b9b9"/><rect x="2" y="3" width="1" height="1" fill="#b9b9b9"/><rect x="4" y="0" width="1" height="1" fill="#b9b9b9"/><rect x="4" y="3" width="1" height="1" fill="#b9b9b9"/><rect x="6" y="0" width="1" height="1" fill="#b9b9b9"/><rect x="6" y="3" width="1" height="1" fill="#b9b9b9"/><rect x="8" y="0" width="1" height="1" fill="#b9b9b9"/><rect x="8" y="3" width="1" height="1" fill="#b9b9b9"/><rect x="10" y="0" width="1" height="1" fill="#b9b9b9"/><rect x="10" y="3" width="1" height="1" fill="#b9b9b9"/><rect x="12" y="0" width="1" height="1" fill="#b9b9b9"/><rect x="12" y="3" width="1" height="1" fill="#b9b9b9"/></svg><svg class="a" style="left:15px;top:150px" width="25" height="25" viewBox="0 0 25 25"><path d="M1 23.500V3l20 20.500zM6 19.500v-6l6 6z" fill="#e9e6e1" fill-rule="evenodd" stroke="#c7c4bf" stroke-width="1.200"/><path d="M18 2h5v21h-5z" fill="#e9e6e1" stroke="#c7c4bf" stroke-width="1.100"/></svg><svg class="a" style="left:8px;top:181px" width="26" height="26" viewBox="0 0 26 26"><path d="M3 8C4 3 9 3 13 4.500s6 .500 9-1c2 2 2 6 0 9-2 2-5 2-8 2s-4 4-8 3C3 16 2 12 3 8z" fill="#dfe0dc" stroke="#d0d1cd" stroke-width="1"/><rect x="14" y="14" width="10" height="10" rx="1.500" fill="#d3d6d8"/><path d="M15.500 19h4v-2.500l3 2.500-3 2.500V19" fill="#f8f8f8" stroke="#f8f8f8" stroke-width="1"/></svg><svg class="a" style="left:14px;top:213px" width="26" height="26" viewBox="0 0 26 26"><path d="M3 8C4 3 9 3 13 4.500s6 .500 9-1c2 2 2 6 0 9-2 2-5 2-8 2s-4 4-8 3C3 16 2 12 3 8z" fill="#dfe0dc" stroke="#d0d1cd" stroke-width="1"/><rect x="14" y="14" width="10" height="10" rx="1.500" fill="#d3d6d8"/><path d="M16.500 19a2.500 2.500 0 1 0 2.500-2.500" fill="none" stroke="#f8f8f8" stroke-width="1.400"/></svg><svg class="a" style="left:14px;top:245px" width="28" height="28" viewBox="0 0 28 28"><circle cx="10" cy="10" r="7.500" fill="#dfe0dc" stroke="#d0d1cd"/><path d="M12 12l6-3 6 4v7l-6 4-6-4z" fill="#e6e7e9" stroke="#d0d1d3"/><path d="M10 10l7 7M17 17v-3M17 17h-3" stroke="#cfcfcf" stroke-width=".9" fill="none"/></svg><svg class="a" style="left:14px;top:277px" width="26" height="26" viewBox="0 0 26 26"><path d="M3 8C4 3 9 3 13 4.500s6 .500 9-1c2 2 2 6 0 9-2 2-5 2-8 2s-4 4-8 3C3 16 2 12 3 8z" fill="#dfe0dc" stroke="#d0d1cd" stroke-width="1"/><rect x="14" y="14" width="10" height="10" rx="1.8" fill="#d3d0c9"/><path d="M15.4 19.0H22.6M19.0 15.4V22.6M16.408 16.408L21.592 21.592M21.592 16.408L16.408 21.592" stroke="#fff" stroke-width="1.5"/><circle cx="19.0" cy="19.0" r="1.2" fill="#d3d0c9"/></svg><svg class="a" style="left:14px;top:309px" width="26" height="26" viewBox="0 0 26 26"><path d="M3 8C4 3 9 3 13 4.500s6 .500 9-1c2 2 2 6 0 9-2 2-5 2-8 2s-4 4-8 3C3 16 2 12 3 8z" fill="#dfe0dc" stroke="#d0d1cd" stroke-width="1"/><rect x="14" y="14" width="10" height="10" rx="1.8" fill="#d3d0c9"/><path d="M15.4 19.0H22.6M19.0 15.4V22.6M16.408 16.408L21.592 21.592M21.592 16.408L16.408 21.592" stroke="#fff" stroke-width="1.5"/><circle cx="19.0" cy="19.0" r="1.2" fill="#d3d0c9"/></svg><svg class="a" style="left:14px;top:341px" width="26" height="26" viewBox="0 0 26 26"><path d="M3 8C4 3 9 3 13 4.500s6 .500 9-1c2 2 2 6 0 9-2 2-5 2-8 2s-4 4-8 3C3 16 2 12 3 8z" fill="#dfe0dc" stroke="#d0d1cd" stroke-width="1"/><rect x="14" y="14" width="10" height="10" rx="1.8" fill="#d3d0c9"/><path d="M15.4 19.0H22.6M19.0 15.4V22.6M16.408 16.408L21.592 21.592M21.592 16.408L16.408 21.592" stroke="#fff" stroke-width="1.5"/><circle cx="19.0" cy="19.0" r="1.2" fill="#d3d0c9"/></svg><svg class="a" style="left:14px;top:374px" width="26" height="26" viewBox="0 0 26 26"><path d="M3 8C4 3 9 3 13 4.500s6 .500 9-1c2 2 2 6 0 9-2 2-5 2-8 2s-4 4-8 3C3 16 2 12 3 8z" fill="#dfe0dc" stroke="#d0d1cd" stroke-width="1"/><rect x="14" y="14" width="10" height="10" rx="1.500" fill="#e3dcdc"/><path d="M16.500 16.500l5 5M21.500 16.500l-5 5" stroke="#fafafa" stroke-width="1.600"/></svg><svg class="a" style="left:38.5px;top:192px" width="9" height="5" viewBox="0 0 9 5"><path d="M0 0h9L4.500 5z" fill="#b0b0b0"/></svg><svg class="a" style="left:14px;top:405px" width="26" height="26" viewBox="0 0 26 26"><path d="M3 8C4 3 9 3 13 4.500s6 .500 9-1c2 2 2 6 0 9-2 2-5 2-8 2s-4 4-8 3C3 16 2 12 3 8z" fill="#dfe0dc" stroke="#d0d1cd" stroke-width="1"/><rect x="14" y="14" width="10" height="10" rx="1.500" fill="#e3dcdc"/><path d="M16.500 16.500l5 5M21.500 16.500l-5 5" stroke="#fafafa" stroke-width="1.600"/></svg><svg class="a" style="left:14px;top:436px" width="26" height="26" viewBox="0 0 26 26"><path d="M3 8C4 3 9 3 13 4.500s6 .500 9-1c2 2 2 6 0 9-2 2-5 2-8 2s-4 4-8 3C3 16 2 12 3 8z" fill="#dfe0dc" stroke="#d0d1cd" stroke-width="1"/></svg><svg class="a" style="left:14px;top:468px" width="26" height="26" viewBox="0 0 26 26"><path d="M4 18C2 13 8 10 12 6s9-3 10 1-3 7-7 10-9 5-11 1z" fill="#dfe0dc" stroke="#d0d1cd"/><path d="M7 16c-1-2 3-4 6-7s6-2 6 0-2 4-5 6-6 3-7 1z" fill="#e9eae6" stroke="#d4d5d1"/></svg><svg class="a" style="left:15px;top:502px" width="26" height="24" viewBox="0 0 26 24"><path d="M2 3l8 17 8-17" fill="none" stroke="#c7c4bf" stroke-width="1.200"/><rect x="12" y="12" width="10" height="10" rx="1.500" fill="#d9d6d0"/></svg><svg class="a" style="left:14px;top:532px" width="26" height="26" viewBox="0 0 26 26"><path d="M3 8C4 3 9 3 13 4.500s6 .500 9-1c2 2 2 6 0 9-2 2-5 2-8 2s-4 4-8 3C3 16 2 12 3 8z" fill="#dfe0dc" stroke="#d0d1cd" stroke-width="1"/></svg><svg class="a" style="left:14px;top:565px" width="26" height="26" viewBox="0 0 26 26"><path d="M3 8C4 3 9 3 13 4.500s6 .500 9-1c2 2 2 6 0 9-2 2-5 2-8 2s-4 4-8 3C3 16 2 12 3 8z" fill="#dfe0dc" stroke="#d0d1cd" stroke-width="1"/></svg><svg class="a" style="left:14px;top:596px" width="26" height="26" viewBox="0 0 26 26"><path d="M3 8C4 3 9 3 13 4.500s6 .500 9-1c2 2 2 6 0 9-2 2-5 2-8 2s-4 4-8 3C3 16 2 12 3 8z" fill="#dfe0dc" stroke="#d0d1cd" stroke-width="1"/></svg><svg class="a" style="left:16px;top:630px" width="22" height="22" viewBox="0 0 22 22"><path d="M1 3h20M1 9h20M1 15h20M1 21h20M11 1v20" stroke="#c7c4bf" stroke-width="1.200"/></svg><svg class="a" style="left:10px;top:660px" width="22" height="26" viewBox="0 0 22 26"><path d="M11 4v14M11 4l8 4-8 4M11 18l-6 7h12z" fill="none" stroke="#c7c4bf" stroke-width="1.200"/><path d="M7 7a8 8 0 0 0-3 12" fill="none" stroke="#c7c4bf" stroke-width="1.200"/></svg><svg class="a" style="left:38.5px;top:672px" width="9" height="5" viewBox="0 0 9 5"><path d="M0 0h9L4.500 5z" fill="#b0b0b0"/></svg>
<!-- layer panel -->
<span class="t" style="left:59px;top:134px;font-size:15px;line-height:17px;letter-spacing:-0.505px;">Layer</span>
<svg class="a" style="left:63px;top:157.5px" width="16" height="16" viewBox="0 0 16 16"><path d="M1 10l5-3 4 5-4 3z" fill="#d9382e"/><path d="M1 10l2.500-1.500 4 5L5 15z" fill="#3d6fc0"/><path d="M3.500 8.500L6 7l4 5-2 1.500z" fill="#f2cf2e"/><path d="M8 8l6-6 1.500 1.500-5.500 6.500z" fill="#d89a3a" stroke="#a46c1b" stroke-width=".6"/></svg><svg class="a" style="left:88px;top:157.5px" width="16" height="16" viewBox="0 0 16 16"><rect x="2" y="6" width="8" height="8" fill="#f2f2f2" stroke="#777" stroke-width="1"/><rect x="4.500" y="3" width="8" height="9" fill="#f2f2f2" stroke="#777" stroke-width="1"/><path d="M7 1v9M9.500 1v9" stroke="#3a6ea5" stroke-width="1.100"/><rect x="9.500" y="10" width="6" height="6" rx="1" fill="#4f9a55"/><path d="M10.500 13h4M12.500 11v4" stroke="#fff" stroke-width="1.200"/></svg><svg class="a" style="left:113px;top:157.5px" width="16" height="16" viewBox="0 0 16 16"><path d="M1 7.500C4 2.500 11 2.500 14 7.500 11 12 4 12 1 7.500z" fill="#eee" stroke="#888" stroke-width="1"/><circle cx="7.500" cy="7" r="2.800" fill="#5577aa"/><circle cx="7.500" cy="7" r="1.300" fill="#223"/><path d="M9 11h7l-3.500 4z" fill="#444"/></svg><svg class="a" style="left:138px;top:157.5px" width="16" height="16" viewBox="0 0 16 16"><path d="M1 1.500h14L9.500 8v7L6.500 13V8z" fill="#6d9bd1" stroke="#3a6ea5" stroke-width=".9"/><path d="M1 1h14v2.200H1z" fill="#f4d83c" stroke="#c4a000" stroke-width=".6"/></svg><svg class="a" style="left:163px;top:157.5px" width="16" height="16" viewBox="0 0 16 16"><text x="0" y="11.500" font-family="Liberation Serif,serif" font-size="19" fill="#5c2072">ε</text><path d="M8.500 9.500h7l-2 3v3.500h-3v-3.500z" fill="#c9c9c9" stroke="#999" stroke-width=".7"/></svg><svg class="a" style="left:203px;top:157.5px" width="16" height="16" viewBox="0 0 16 16"><path d="M2 2v12M2 4h3M2 8h3M2 12h3" stroke="#999" stroke-width=".9"/><rect x="4" y="2.500" width="3" height="3" fill="#f39a1f"/><rect x="4" y="10.500" width="3" height="3" fill="#f39a1f"/><path d="M9 1h4v8h3l-5 6-5-6h3z" fill="#4b84c6" stroke="#2f63a3" stroke-width=".7"/></svg><svg class="a" style="left:228px;top:157.5px" width="16" height="16" viewBox="0 0 16 16"><path d="M2 2v12M2 4h3M2 8h3M2 12h3" stroke="#999" stroke-width=".9"/><rect x="4" y="2.500" width="3" height="3" fill="#f39a1f"/><rect x="4" y="10.500" width="3" height="3" fill="#f39a1f"/><path d="M9 15h4V7h3l-5-6-5 6h3z" fill="#4b84c6" stroke="#2f63a3" stroke-width=".7"/></svg><svg class="a" style="left:253px;top:157.5px" width="16" height="16" viewBox="0 0 16 16"><rect x="1.500" y="1.500" width="10" height="10" fill="#f2f2f2" stroke="#777" stroke-width="1"/><rect x="9" y="9.500" width="6.500" height="5" rx="1.200" fill="#e8323a"/><path d="M10.300 12h4" stroke="#fff" stroke-width="1.300"/></svg><svg class="a" style="left:185.5px;top:164px" width="9" height="5" viewBox="0 0 9 5"><path d="M0 0h9L4.500 5z" fill="#4d4d4d"/></svg><svg class="a" style="left:274px;top:136px" width="11" height="11" viewBox="0 0 11 11"><rect x=".500" y=".500" width="10" height="10" rx="2" fill="#f6f6f6" stroke="#4a4a4a" stroke-width="1.200"/><rect x="2.500" y="4" width="4" height="4" fill="none" stroke="#4a4a4a" stroke-width="1"/><path d="M4.500 4V2.500h4v4H6.500" fill="none" stroke="#4a4a4a" stroke-width="1"/></svg><svg class="a" style="left:288px;top:136px" width="11" height="11" viewBox="0 0 11 11"><rect x=".500" y=".500" width="10" height="10" rx="2" fill="#f6f6f6" stroke="#4a4a4a" stroke-width="1.200"/><path d="M3 3l5 5M8 3l-5 5" stroke="#333" stroke-width="1.700"/></svg>
<div class="tree" style="left:55px;top:182px;width:246px;height:531px"><div class="lrow" style="top:0"><svg class="a" style="left:28px;top:1px" width="19" height="20" viewBox="0 0 19 20"><rect x="1" y="1" width="17" height="18" rx="2.5" fill="#f4f4f4" stroke="#8c8c8c" stroke-width="1.4"/><path d="M1 5.5h17" stroke="#8c8c8c" stroke-width="1.2"/><path d="M4 3.3h4M10 3.3h5M4 9h4M10 9h5M4 12.5h4M10 12.5h5M4 16h4M10 16h5" stroke="#9a9a9a" stroke-width="1.5"/></svg><span class="lt" style="left:53px;font-weight:bold;letter-spacing:-0.347px">out_regioni_yq</span></div><div class="a" style="left:0;top:22px;width:244px;height:22px;background:#f0f0f0"></div><div class="lrow" style="top:22px"><svg class="a" style="left:6px;top:8px" width="11" height="7" viewBox="0 0 11 7"><path d="M0.5 0.5h10l-5 6z" fill="#444"/></svg><div class="cb" style="left:27px;top:3px"><svg width="14" height="14" viewBox="0 0 14 14"><path d="M2.2 7.2 L5.4 11.2 L11.6 2.2" fill="none" stroke="#000" stroke-width="2.1"/></svg></div><svg class="a" style="left:49px;top:3px" width="22" height="14" viewBox="0 0 22 14"><path d="M2 3 C5 0.5 8 0.5 11 2 C14 3.2 17 0.8 20 2 C21.5 5 21 9 20 12.5 C17 10 14 10 11 10.5 C8 11 5 10 2.5 13 C1 9 1 6 2 3Z" fill="#9ec3e6" stroke="#5b87b5" stroke-width="1.2"/></svg><span class="lt" style="left:76px;font-weight:bold;text-decoration:underline;text-underline-offset:2px;letter-spacing:0.129px">Reg01012018_WGS84</span></div><div class="lrow" style="top:44px"><div class="cb" style="left:52px;top:3px"><svg width="14" height="14" viewBox="0 0 14 14"><path d="M2.2 7.2 L5.4 11.2 L11.6 2.2" fill="none" stroke="#000" stroke-width="2.1"/></svg></div><div class="sw" style="left:75px;top:2px;background:rgb(232,193,76)"></div><span class="lt" style="left:100px;letter-spacing:0.079px">Abruzzo</span></div><div class="lrow" style="top:66px"><div class="cb" style="left:52px;top:3px"><svg width="14" height="14" viewBox="0 0 14 14"><path d="M2.2 7.2 L5.4 11.2 L11.6 2.2" fill="none" stroke="#000" stroke-width="2.1"/></svg></div><div class="sw" style="left:75px;top:2px;background:rgb(48,218,227)"></div><span class="lt" style="left:100px;letter-spacing:-0.077px">Basilicata</span></div><div class="lrow" style="top:88px"><div class="cb" style="left:52px;top:3px"><svg width="14" height="14" viewBox="0 0 14 14"><path d="M2.2 7.2 L5.4 11.2 L11.6 2.2" fill="none" stroke="#000" stroke-width="2.1"/></svg></div><div class="sw" style="left:75px;top:2px;background:rgb(224,59,169)"></div><span class="lt" style="left:100px;letter-spacing:-0.052px">Calabria</span></div><div class="lrow" style="top:110px"><div class="cb" style="left:52px;top:3px"><svg width="14" height="14" viewBox="0 0 14 14"><path d="M2.2 7.2 L5.4 11.2 L11.6 2.2" fill="none" stroke="#000" stroke-width="2.1"/></svg></div><div class="sw" style="left:75px;top:2px;background:rgb(163,225,124)"></div><span class="lt" style="left:100px;letter-spacing:-0.196px">Campania</span></div><div class="lrow" style="top:132px"><div class="cb" style="left:52px;top:3px"><svg width="14" height="14" viewBox="0 0 14 14"><path d="M2.2 7.2 L5.4 11.2 L11.6 2.2" fill="none" stroke="#000" stroke-width="2.1"/></svg></div><div class="sw" style="left:75px;top:2px;background:rgb(162,15,210)"></div><span class="lt" style="left:100px;letter-spacing:0.048px">Emilia-Romagna</span></div><div class="lrow" style="top:154px"><div class="cb" style="left:52px;top:3px"><svg width="14" height="14" viewBox="0 0 14 14"><path d="M2.2 7.2 L5.4 11.2 L11.6 2.2" fill="none" stroke="#000" stroke-width="2.1"/></svg></div><div class="sw" style="left:75px;top:2px;background:rgb(68,239,48)"></div><span class="lt" style="left:100px;letter-spacing:-0.153px">Friuli Venezia Giulia</span></div><div class="lrow" style="top:176px"><div class="cb" style="left:52px;top:3px"><svg width="14" height="14" viewBox="0 0 14 14"><path d="M2.2 7.2 L5.4 11.2 L11.6 2.2" fill="none" stroke="#000" stroke-width="2.1"/></svg></div><div class="sw" style="left:75px;top:2px;background:rgb(179,235,59)"></div><span class="lt" style="left:100px;letter-spacing:-0.215px">Lazio</span></div><div class="lrow" style="top:198px"><div class="cb" style="left:52px;top:3px"><svg width="14" height="14" viewBox="0 0 14 14"><path d="M2.2 7.2 L5.4 11.2 L11.6 2.2" fill="none" stroke="#000" stroke-width="2.1"/></svg></div><div class="sw" style="left:75px;top:2px;background:rgb(219,21,209)"></div><span class="lt" style="left:100px;letter-spacing:-0.005px">Liguria</span></div><div class="lrow" style="top:220px"><div class="cb" style="left:52px;top:3px"><svg width="14" height="14" viewBox="0 0 14 14"><path d="M2.2 7.2 L5.4 11.2 L11.6 2.2" fill="none" stroke="#000" stroke-width="2.1"/></svg></div><div class="sw" style="left:75px;top:2px;background:rgb(18,39,233)"></div><span class="lt" style="left:100px;letter-spacing:0.14px">Lombardia</span></div><div class="lrow" style="top:242px"><div class="cb" style="left:52px;top:3px"><svg width="14" height="14" viewBox="0 0 14 14"><path d="M2.2 7.2 L5.4 11.2 L11.6 2.2" fill="none" stroke="#000" stroke-width="2.1"/></svg></div><div class="sw" style="left:75px;top:2px;background:rgb(120,204,137)"></div><span class="lt" style="left:100px;letter-spacing:-0.143px">Marche</span></div><div class="lrow" style="top:264px"><div class="cb" style="left:52px;top:3px"><svg width="14" height="14" viewBox="0 0 14 14"><path d="M2.2 7.2 L5.4 11.2 L11.6 2.2" fill="none" stroke="#000" stroke-width="2.1"/></svg></div><div class="sw" style="left:75px;top:2px;background:rgb(231,108,155)"></div><span class="lt" style="left:100px;letter-spacing:0.251px">Molise</span></div><div class="lrow" style="top:286px"><div class="cb" style="left:52px;top:3px"><svg width="14" height="14" viewBox="0 0 14 14"><path d="M2.2 7.2 L5.4 11.2 L11.6 2.2" fill="none" stroke="#000" stroke-width="2.1"/></svg></div><div class="sw" style="left:75px;top:2px;background:rgb(237,177,124)"></div><span class="lt" style="left:100px;letter-spacing:0.033px">Piemonte</span></div><div class="lrow" style="top:308px"><div class="cb" style="left:52px;top:3px"><svg width="14" height="14" viewBox="0 0 14 14"><path d="M2.2 7.2 L5.4 11.2 L11.6 2.2" fill="none" stroke="#000" stroke-width="2.1"/></svg></div><div class="sw" style="left:75px;top:2px;background:rgb(63,175,231)"></div><span class="lt" style="left:100px;letter-spacing:-0.079px">Puglia</span></div><div class="lrow" style="top:330px"><div class="cb" style="left:52px;top:3px"><svg width="14" height="14" viewBox="0 0 14 14"><path d="M2.2 7.2 L5.4 11.2 L11.6 2.2" fill="none" stroke="#000" stroke-width="2.1"/></svg></div><div class="sw" style="left:75px;top:2px;background:rgb(210,214,92)"></div><span class="lt" style="left:100px;letter-spacing:-0.208px">Sardegna</span></div><div class="lrow" style="top:352px"><div class="cb" style="left:52px;top:3px"><svg width="14" height="14" viewBox="0 0 14 14"><path d="M2.2 7.2 L5.4 11.2 L11.6 2.2" fill="none" stroke="#000" stroke-width="2.1"/></svg></div><div class="sw" style="left:75px;top:2px;background:rgb(234,16,38)"></div><span class="lt" style="left:100px;letter-spacing:0.02px">Sicilia</span></div><div class="lrow" style="top:374px"><div class="cb" style="left:52px;top:3px"><svg width="14" height="14" viewBox="0 0 14 14"><path d="M2.2 7.2 L5.4 11.2 L11.6 2.2" fill="none" stroke="#000" stroke-width="2.1"/></svg></div><div class="sw" style="left:75px;top:2px;background:rgb(239,110,81)"></div><span class="lt" style="left:100px;letter-spacing:-0.395px">Toscana</span></div><div class="lrow" style="top:396px"><div class="cb" style="left:52px;top:3px"><svg width="14" height="14" viewBox="0 0 14 14"><path d="M2.2 7.2 L5.4 11.2 L11.6 2.2" fill="none" stroke="#000" stroke-width="2.1"/></svg></div><div class="sw" style="left:75px;top:2px;background:rgb(50,235,192)"></div><span class="lt" style="left:100px;letter-spacing:0.294px">Trentino-Alto Adige</span></div><div class="lrow" style="top:418px"><div class="cb" style="left:52px;top:3px"><svg width="14" height="14" viewBox="0 0 14 14"><path d="M2.2 7.2 L5.4 11.2 L11.6 2.2" fill="none" stroke="#000" stroke-width="2.1"/></svg></div><div class="sw" style="left:75px;top:2px;background:rgb(160,107,220)"></div><span class="lt" style="left:100px;letter-spacing:0.192px">Umbria</span></div><div class="lrow" style="top:440px"><div class="cb" style="left:52px;top:3px"><svg width="14" height="14" viewBox="0 0 14 14"><path d="M2.2 7.2 L5.4 11.2 L11.6 2.2" fill="none" stroke="#000" stroke-width="2.1"/></svg></div><div class="sw" style="left:75px;top:2px;background:rgb(98,66,238)"></div><span class="lt" style="left:100px;letter-spacing:0.036px">Valle d'Aosta</span></div><div class="lrow" style="top:462px"><div class="cb" style="left:52px;top:3px"><svg width="14" height="14" viewBox="0 0 14 14"><path d="M2.2 7.2 L5.4 11.2 L11.6 2.2" fill="none" stroke="#000" stroke-width="2.1"/></svg></div><div class="sw" style="left:75px;top:2px;background:rgb(34,233,131)"></div><span class="lt" style="left:100px;letter-spacing:-0.062px">Veneto</span></div></div>
<!-- browser panel -->
<span class="t" style="left:59.5px;top:722px;font-size:15px;line-height:17px;letter-spacing:-0.335px;">Browser</span>
<svg class="a" style="left:62px;top:746px" width="16" height="16" viewBox="0 0 16 16"><rect x="1.500" y="1.500" width="10" height="10" fill="#f2f2f2" stroke="#777" stroke-width="1"/><rect x="9" y="9" width="6" height="6" rx="1.200" fill="#4f9a55"/><circle cx="12" cy="12" r="1.300" fill="#fff"/></svg><svg class="a" style="left:88px;top:746px" width="16" height="16" viewBox="0 0 16 16"><g transform="scale(.667)"><path d="M3 11C3 5 8 2 12.500 2c3 0 5 1.300 6.500 3l2.500-2.500V10h-7.500l2.500-2.500C15.500 6.500 14 6 12.500 6 9.500 6 7.500 8 7 11z" fill="#4d8fd6" stroke="#2f6db5" stroke-width=".8"/><path d="M21 13c0 6-5 9-9.500 9-3 0-5-1.300-6.500-3L2.500 21.500V14H10l-2.500 2.500C8.500 17.500 10 18 11.500 18c3 0 5-2 5.500-5z" fill="#4d8fd6" stroke="#2f6db5" stroke-width=".8"/></g></svg><svg class="a" style="left:113px;top:746px" width="16" height="16" viewBox="0 0 16 16"><path d="M1 1.500h14L9.500 8v7L6.500 13V8z" fill="#6d9bd1" stroke="#3a6ea5" stroke-width=".9"/><path d="M1 1h14v2.200H1z" fill="#f4d83c" stroke="#c4a000" stroke-width=".6"/></svg><svg class="a" style="left:138px;top:746px" width="16" height="16" viewBox="0 0 16 16"><path d="M2 2v12M2 4h3M2 8h3M2 12h3" stroke="#999" stroke-width=".9"/><rect x="4" y="2.500" width="3" height="3" fill="#f39a1f"/><rect x="4" y="10.500" width="3" height="3" fill="#f39a1f"/><path d="M9 15h4V7h3l-5-6-5 6h3z" fill="#4b84c6" stroke="#2f63a3" stroke-width=".7"/></svg><svg class="a" style="left:163px;top:746px" width="16" height="16" viewBox="0 0 16 16"><circle cx="8" cy="8" r="7" fill="#5b8cc6" stroke="#3a6ea5" stroke-width=".8"/><text x="6" y="12.300" font-family="Liberation Serif,serif" font-style="italic" font-weight="bold" font-size="11" fill="#fff">i</text></svg><svg class="a" style="left:274px;top:724px" width="11" height="11" viewBox="0 0 11 11"><rect x=".500" y=".500" width="10" height="10" rx="2" fill="#f6f6f6" stroke="#4a4a4a" stroke-width="1.200"/><rect x="2.500" y="4" width="4" height="4" fill="none" stroke="#4a4a4a" stroke-width="1"/><path d="M4.500 4V2.500h4v4H6.500" fill="none" stroke="#4a4a4a" stroke-width="1"/></svg><svg class="a" style="left:288px;top:724px" width="11" height="11" viewBox="0 0 11 11"><rect x=".500" y=".500" width="10" height="10" rx="2" fill="#f6f6f6" stroke="#4a4a4a" stroke-width="1.200"/><path d="M3 3l5 5M8 3l-5 5" stroke="#333" stroke-width="1.700"/></svg><svg class="a" style="left:170px;top:715px" width="18" height="2"><rect x="0" y="0" width="1" height="1" fill="#b0b0b0"/><rect x="3" y="0" width="1" height="1" fill="#b0b0b0"/><rect x="6" y="0" width="1" height="1" fill="#b0b0b0"/><rect x="9" y="0" width="1" height="1" fill="#b0b0b0"/><rect x="12" y="0" width="1" height="1" fill="#b0b0b0"/><rect x="15" y="0" width="1" height="1" fill="#b0b0b0"/></svg><svg class="a" style="left:304px;top:585px" width="2" height="18"><rect x="0" y="0" width="1" height="1" fill="#b0b0b0"/><rect x="0" y="3" width="1" height="1" fill="#b0b0b0"/><rect x="0" y="6" width="1" height="1" fill="#b0b0b0"/><rect x="0" y="9" width="1" height="1" fill="#b0b0b0"/><rect x="0" y="12" width="1" height="1" fill="#b0b0b0"/><rect x="0" y="15" width="1" height="1" fill="#b0b0b0"/></svg>
<div class="tree" style="left:55px;top:770px;width:246px;height:278px;overflow:hidden"><div class="lrow" style="top:0px"><div class="a" style="left:27px;top:1px;width:20px;height:20px"><svg width="21" height="20" viewBox="0 0 24 22" style="position:absolute;left:0;top:0"><path d="M12 1l3.200 7 7.600.800-5.700 5.100 1.700 7.500L12 17.500 5.200 21.400l1.700-7.500L1.200 8.800l7.600-.800z" fill="#fdf07a" stroke="#d8b600" stroke-width="1.300"/></svg></div><span class="lt" style="left:53px;letter-spacing:0.09px">Preferiti</span></div><div class="lrow" style="top:22px"><svg class="a" style="left:8px;top:6px" width="7" height="11" viewBox="0 0 7 11"><path d="M0.5 0.5v10l6-5z" fill="#444"/></svg><div class="a" style="left:27px;top:1px;width:20px;height:20px"><svg width="20" height="20" viewBox="0 0 20 20"><path d="M2.500 3h5l1.500 2h8c.800 0 1.500.700 1.500 1.500v9c0 .800-.700 1.500-1.500 1.500h-14.500c-.800 0-1.500-.700-1.500-1.500v-11c0-.800.700-1.500 1.500-1.500z" fill="#f0f0f0" stroke="#a0a09c" stroke-width="1.300"/><path d="M5.500 11.500l4.500-4 4.500 4M6.800 11V15h6.400v-4" fill="none" stroke="#333" stroke-width="1.300"/></svg></div><span class="lt" style="left:53px;letter-spacing:0.662px">Home</span></div><div class="lrow" style="top:44px"><svg class="a" style="left:8px;top:6px" width="7" height="11" viewBox="0 0 7 11"><path d="M0.5 0.5v10l6-5z" fill="#444"/></svg><div class="a" style="left:27px;top:1px;width:20px;height:20px"><svg width="20" height="20" viewBox="0 0 20 20"><path d="M2.500 3h5l1.500 2h8c.800 0 1.500.700 1.500 1.500v9c0 .800-.700 1.500-1.500 1.500h-14.500c-.800 0-1.500-.700-1.500-1.500v-11c0-.800.700-1.500 1.500-1.500z" fill="#f0f0f0" stroke="#a0a09c" stroke-width="1.300"/></svg></div><span class="lt" style="left:53px;letter-spacing:-0.434px">C:\</span></div><div class="lrow" style="top:66px"><svg class="a" style="left:8px;top:6px" width="7" height="11" viewBox="0 0 7 11"><path d="M0.5 0.5v10l6-5z" fill="#444"/></svg><div class="a" style="left:27px;top:1px;width:20px;height:20px"><svg width="20" height="20" viewBox="0 0 20 20"><path d="M2.500 3h5l1.500 2h8c.800 0 1.500.700 1.500 1.500v9c0 .800-.700 1.500-1.500 1.500h-14.500c-.800 0-1.500-.700-1.500-1.500v-11c0-.800.700-1.500 1.500-1.500z" fill="#f0f0f0" stroke="#a0a09c" stroke-width="1.300"/></svg></div><span class="lt" style="left:53px;letter-spacing:0.416px">D:\</span></div><div class="lrow" style="top:88px"><svg class="a" style="left:8px;top:6px" width="7" height="11" viewBox="0 0 7 11"><path d="M0.5 0.5v10l6-5z" fill="#444"/></svg><div class="a" style="left:27px;top:1px;width:20px;height:20px"><svg width="20" height="20" viewBox="0 0 24 24"><path d="M2 9l10-4 10 4v9l-10 5-10-5z" fill="#e7c52c" stroke="#5a4a00" stroke-width="1"/><path d="M2 9l10 4.500V23M12 13.500L22 9" fill="none" stroke="#5a4a00" stroke-width="1"/><path d="M12 13.500L22 9v9l-10 5z" fill="#fbe55b"/><circle cx="12" cy="7" r="6" fill="#6f98cc" stroke="#3d6292" stroke-width=".9"/><path d="M8 5c2-2 4 0 3 2s2 2 3 1 2 1 1 3M9 10c1 0 2 1 1.500 2.500" stroke="#2c4f80" stroke-width="1.600" fill="none"/></svg></div><span class="lt" style="left:53px;letter-spacing:-0.503px">GeoPackage</span></div><div class="lrow" style="top:110px"><svg class="a" style="left:8px;top:6px" width="7" height="11" viewBox="0 0 7 11"><path d="M0.5 0.5v10l6-5z" fill="#444"/></svg><div class="a" style="left:27px;top:1px;width:20px;height:20px"><svg width="20" height="20" viewBox="0 0 24 24"><path d="M3 23C5 14 9 5 22 1c1 6-3 12-12 14-3 1-5 4-6 8z" fill="#86a9d6" stroke="#3f689c" stroke-width="1"/><path d="M4 21C8 12 13 6 21 2" fill="none" stroke="#3f689c" stroke-width=".9"/></svg></div><span class="lt" style="left:53px;letter-spacing:0.032px">SpatiaLite</span></div><div class="lrow" style="top:132px"><svg class="a" style="left:8px;top:6px" width="7" height="11" viewBox="0 0 7 11"><path d="M0.5 0.5v10l6-5z" fill="#444"/></svg><div class="a" style="left:27px;top:1px;width:20px;height:20px"><svg width="20" height="20" viewBox="0 0 20 20"><path d="M3 3c3-3 12-3 14 1 1 3 0 7-2 9l-1 5h-3l-.500-5H8c-3 0-6-2-6-5 0-2 0-4 1-5z" fill="#5f84b8" stroke="#2f4f7d" stroke-width="1"/><path d="M7 4v9M13 4c1 3 0 6-1 9" fill="none" stroke="#2f4f7d" stroke-width="1"/><circle cx="9" cy="6" r=".9" fill="#fff"/></svg></div><span class="lt" style="left:53px;letter-spacing:-0.976px">PostGIS</span></div><div class="lrow" style="top:154px"><svg class="a" style="left:8px;top:6px" width="7" height="11" viewBox="0 0 7 11"><path d="M0.5 0.5v10l6-5z" fill="#444"/></svg><div class="a" style="left:27px;top:1px;width:20px;height:20px"><svg width="20" height="20" viewBox="0 0 20 20"><path d="M1 1c6 1 13 4 18 9-5 1-12 4-17 9 3-6 3-12-1-18z" fill="#7fa3d0" stroke="#2f4f7d" stroke-width="1"/><path d="M5 4c2 4 2 8 0 12M9 6c1 3 1 5 0 8M13 8c.500 1.500.500 2.500 0 4" fill="none" stroke="#2f4f7d" stroke-width=".9"/></svg></div><span class="lt" style="left:53px;letter-spacing:-1.054px">MSSQL</span></div><div class="lrow" style="top:176px"><svg class="a" style="left:8px;top:6px" width="7" height="11" viewBox="0 0 7 11"><path d="M0.5 0.5v10l6-5z" fill="#444"/></svg><div class="a" style="left:27px;top:1px;width:20px;height:20px"><svg width="20" height="20" viewBox="0 0 20 20"><rect x=".500" y=".500" width="19" height="19" rx="3" fill="#6b96cc"/><text x="2" y="13" font-family="Liberation Sans,sans-serif" font-weight="bold" font-size="7.500" fill="#fff">DB2</text></svg></div><span class="lt" style="left:53px;letter-spacing:0.11px">DB2</span></div><div class="lrow" style="top:198px"><div class="a" style="left:27px;top:1px;width:20px;height:20px"><svg width="20" height="20" viewBox="0 0 20 20"><circle cx="10" cy="10" r="8.500" fill="#b9cfe9" stroke="#3d5f8f" stroke-width="1"/><path d="M1.500 10h17M10 1.500v17M3.500 5c4 1.500 9 1.500 13 0M3.500 15c4-1.500 9-1.500 13 0M10 1.500c-4 3.500-4 13.500 0 17M10 1.500c4 3.500 4 13.500 0 17" fill="none" stroke="#5f7fa8" stroke-width=".7"/><path d="M5 5h3v3l-2 3-1-2zM11 4h4l1 3-2 1-2-1zM12 10h3v4l-2 2zM7 12h2v4z" fill="#2f4f7d"/></svg></div><span class="lt" style="left:53px;letter-spacing:-0.235px">WMS/WMTS</span></div><div class="lrow" style="top:220px"><svg class="a" style="left:8px;top:6px" width="7" height="11" viewBox="0 0 7 11"><path d="M0.5 0.5v10l6-5z" fill="#444"/></svg><div class="a" style="left:27px;top:1px;width:20px;height:20px"><svg width="20" height="20" viewBox="0 0 20 20"><circle cx="10" cy="10" r="8.500" fill="#b9cfe9" stroke="#3d5f8f" stroke-width="1"/><path d="M1.500 10h17M10 1.500v17M3.500 5c4 1.500 9 1.500 13 0M3.500 15c4-1.500 9-1.500 13 0M10 1.500c-4 3.500-4 13.500 0 17M10 1.500c4 3.500 4 13.500 0 17" fill="none" stroke="#5f7fa8" stroke-width=".7"/><path d="M5 5h3v3l-2 3-1-2zM11 4h4l1 3-2 1-2-1zM12 10h3v4l-2 2zM7 12h2v4z" fill="#2f4f7d"/></svg></div><span class="lt" style="left:53px;letter-spacing:-0.36px">XYZ Tiles</span></div><div class="lrow" style="top:242px"><div class="a" style="left:27px;top:1px;width:20px;height:20px"><svg width="20" height="20" viewBox="0 0 20 20"><circle cx="10" cy="10" r="8.500" fill="#dfe8f4" stroke="#3d5f8f" stroke-width="1"/><path d="M1.500 10h17M10 1.500v17M3.500 5c4 1.500 9 1.500 13 0M3.500 15c4-1.500 9-1.500 13 0M10 1.500c-4 3.500-4 13.500 0 17M10 1.500c4 3.500 4 13.500 0 17" fill="none" stroke="#2f4f7d" stroke-width="1.300"/></svg></div><span class="lt" style="left:53px;letter-spacing:-1.498px">WCS</span></div><div class="lrow" style="top:264px"><div class="a" style="left:27px;top:1px;width:20px;height:20px"><svg width="20" height="20" viewBox="0 0 20 20"><circle cx="10" cy="10" r="8.500" fill="#b9cfe9" stroke="#3d5f8f" stroke-width="1"/><path d="M1.500 10h17M10 1.500v17M3.500 5c4 1.500 9 1.500 13 0M3.500 15c4-1.500 9-1.500 13 0M10 1.500c-4 3.500-4 13.500 0 17M10 1.500c4 3.500 4 13.500 0 17" fill="none" stroke="#5f7fa8" stroke-width=".7"/><path d="M5 5h3v3l-2 3-1-2zM11 4h4l1 3-2 1-2-1zM12 10h3v4l-2 2zM7 12h2v4z" fill="#2f4f7d"/></svg></div><span class="lt" style="left:53px;letter-spacing:-1.163px">WFS</span></div><div class="a" style="left:227px;top:0;width:17px;height:276px;background:#f0f0f0"></div><div class="a" style="left:228px;top:187px;width:15px;height:76px;background:#cdcdcd"></div><svg class="a" style="left:231px;top:6px" width="9" height="6" viewBox="0 0 9 6"><path d="M0 5.5 4.5 0.5 9 5.5z" fill="#555"/></svg><svg class="a" style="left:231px;top:265px" width="9" height="6" viewBox="0 0 9 6"><path d="M0 0.5 4.5 5.5 9 0.5z" fill="#555"/></svg></div>
<!-- map canvas -->
<div class="a" style="left:308px;top:132px;width:1018px;height:916px;background:#fff;border:1px solid #b2b2b2"></div>
<svg class="a" style="left:309px;top:133px" width="1016" height="914" viewBox="309 133 1016 914"><g stroke="#181818" stroke-width="1.15" stroke-linejoin="round"><path d="M575.49,205.71 577.67,208.81 577.42,211.31 576.73,214.93 578.42,217.95 579.38,221.6 580.77,223.51 583.4,224.89 585.33,227.24 587.53,229.69 589.73,232.78 588.51,236.5 587.48,238.85 586.54,241.81 585.11,244.09 583.93,245.95 582.66,249.26 582.41,252.63 584.41,255.23 585.56,257.41 586.42,260.38 587.61,262.18 588.73,265.19 588.45,269.69 589.87,272.85 591.58,274.96 592.13,277.14 593.16,279.55 595.15,282.36 596.46,284.9 593.71,285.54 590.01,287.77 588.85,292.2 584.82,291.31 581.33,291.32 581.65,294.41 580.52,296.86 581.23,300.35 583.13,302.83 583.49,305.06 585.16,307.07 586.46,310.13 588.39,310.94 591.24,311.3 593.51,312.19 596.87,313.84 598.5,314.52 601.6,314.73 602.4,317.2 604.23,320.31 605.72,321.94 607.43,324.68 609.37,326.47 610.99,329.36 613.35,331.09 615.2,332.22 615.54,336.15 616.73,338.57 615.94,341.83 615.02,343.59 609.83,345.14 606.92,343.12 605.12,341.26 603.67,342.97 601.53,345.34 599.78,347.35 597.39,349.26 595.09,350.4 592.77,351.12 590.65,349.62 587.38,347.67 585.61,349.9 582.93,351.06 580.07,352.84 575.98,353.63 572.19,353.73 568.71,353.03 566.1,352.87 564.89,355.57 563.74,357.09 562.52,359.98 561.25,362.42 559.38,364.79 557.26,366.83 556.36,370.24 554.92,372.93 553.64,375.97 551.19,378.21 549.03,380.94 546.48,380.41 542.63,380.52 540.16,380.38 537.38,378.96 533.72,377.54 530.92,378.52 527.59,378.88 524.45,378.62 521.14,378.94 518.47,380.12 516.52,379.73 513.53,377.99 512.29,376.7 509.28,375.45 507.59,373.46 504.94,372.37 502.9,372.11 500.47,371.28 497.27,369.84 496.57,366.35 496.29,363.31 494.78,359.77 493.59,357.33 492.39,355.55 492.16,352.04 491.06,350.35 492.09,347.58 493.19,344.97 493.34,342.39 494.7,339.78 496.81,339.03 499.63,337.24 498.61,333.95 498.42,330.91 497.26,327.24 495.06,325 492.72,322.72 489.51,320.2 486.99,319.54 485.04,317.59 484.1,314.45 483.99,310.14 482.23,307.53 480.3,305.08 482.97,304.88 486.05,303.04 489.97,303.43 492.2,302.31 495.12,299.36 497.62,297.67 500.4,295.98 503.74,296.09 506.31,294.7 506.88,292.18 507.9,288.38 508.77,285.19 506.78,282.87 506.03,279.47 505.02,277.56 510.27,277.81 512.27,276.42 516.18,274.83 518.63,273.73 521.38,271.9 524.13,271.28 527.13,269.74 530.42,271.14 533.68,270.57 537.71,271.54 539.96,270.17 542.85,270.09 544.56,268.18 547.47,267.23 548.68,262.69 548.12,259.4 546.81,257.85 546.07,254.61 545.96,251.07 545.96,247.42 546.58,245.3 547.37,239.71 549.76,239.42 552.25,237.73 555.21,237.35 555.98,232.72 558.27,229.76 560.89,227.41 560.13,225.15 559.25,223.06 558.8,220.28 561.55,217.6 563.65,216.84 564.67,214.75 566.7,212.46 568.58,210.52 569.68,207.35 573.21,206.43Z" fill="rgb(237,177,124)"/>
<path d="M490.21,251.14 492.83,249.25 495.24,248.87 497.96,246.31 501.23,245.17 504.35,246.86 506.33,248.56 508.79,248.05 511.81,247.31 514.14,247.23 517.53,246.43 519.9,245.38 522.44,244.51 525.6,243.04 526.97,242.96 529.84,241.58 531.81,242.39 534.51,243.26 537.42,244.33 540.91,245.13 543.6,245.25 546.58,245.3 545.96,247.42 545.96,251.07 546.07,254.61 546.81,257.85 548.12,259.4 548.68,262.69 547.47,267.23 544.56,268.18 542.85,270.09 539.96,270.17 537.71,271.54 533.68,270.57 530.42,271.14 527.13,269.74 524.13,271.28 521.38,271.9 518.63,273.73 516.18,274.83 512.27,276.42 510.27,277.81 506.95,276.34 503.98,276.24 501.36,272.88 500.93,270.52 498.39,267.33 496.5,265.38 495.2,262.7 492.33,260.99 490.67,258.52 490.36,254.66Z" fill="rgb(98,66,238)"/>
<path d="M589.73,232.78 592.35,231.65 596.55,232.66 597.88,236.52 595.58,239.22 597.51,242.83 599.83,245.03 600.65,248.44 602.83,250.96 605.36,252.79 608.24,252.85 608.97,247.84 606.46,245.98 604.86,243.27 605.48,240.27 606.94,237 608.44,235.06 609.31,232.7 610.93,231.13 613.03,228.62 614.78,226.42 615.99,222.7 618.95,220.55 620.13,217.78 621.26,214.43 621.52,210.98 619.93,207.88 619.13,205.7 620.92,204.2 623.68,202.51 628.74,202.66 629.54,207.2 629.7,210.25 632.28,212.82 633.52,214.75 635.28,216.04 638.04,215.96 642.35,216.38 644.9,213.27 648.36,212.07 650.1,212.45 653.96,211.44 657.76,215.01 659.98,217.44 661.28,220.94 665.26,221.15 666.59,216.4 663.6,212.55 665.35,207.37 662.83,205.56 659.83,202.3 661.3,199.65 661.82,196.28 664.22,194.26 667.48,192.97 671.48,196.27 674.27,196.5 677.8,198.25 681.03,198.48 684.48,200.44 687.2,202.19 688.62,207.78 688.08,211.31 686.13,213.88 686.05,217.32 686.61,218.97 687.56,222.55 687.69,225.54 687.18,227.64 686.33,231.33 683.77,234.86 682.24,237.83 683.39,241.91 683.81,244.95 684.32,246.79 685.19,250.5 687.15,251.92 687.83,254.96 690.97,253.88 694.7,253.42 698.75,253.78 701.37,252.88 699.56,255.66 698.22,257.24 697.85,259.64 696.3,262.28 693.78,265.18 693.33,268.05 692.35,272.65 692.75,275.25 694.01,278.33 694.05,281.51 694.06,283.46 695.23,286.73 696.29,288.94 698.13,290.3 700.54,292.57 703.97,293.93 706.33,295.23 708.1,297.7 709.71,298.91 712.15,301.07 715.25,303.9 718.34,305.03 721,306.29 723.22,308.62 726.48,309.62 728.42,310.99 730.89,313 733.18,314.66 734.99,316.95 731.4,316.93 728.85,317.25 724.94,317.27 722.08,316.71 718.2,317.2 715.34,316.45 711.76,316.58 709.99,318.56 707.19,318.77 704.94,318.21 702.48,316.45 700.07,315.88 697.01,316.74 695.4,318.55 692.27,318.45 690.04,319.06 686.01,320.03 684.57,318.84 681.96,317.22 679.72,315.18 677.2,314.73 675.69,313.53 672.27,312.63 668.64,313.08 665.3,312.28 663.07,311.63 660.33,310 658.63,307.19 656.56,304.98 653.53,306.45 650.04,307.78 644.87,308.75 641.21,307.81 638.53,305.98 636.14,306.66 632.32,308.17 630.44,308.82 627.18,309.79 625.26,312.66 623.48,314.74 622.4,317.4 621.07,319.88 621.22,323.78 622.69,327.86 622.02,331.29 622.24,334.11 619.99,337.31 616.73,338.57 615.54,336.15 615.2,332.22 613.35,331.09 610.99,329.36 609.37,326.47 607.43,324.68 605.72,321.94 604.23,320.31 602.4,317.2 601.6,314.73 598.5,314.52 596.87,313.84 593.51,312.19 591.24,311.3 588.39,310.94 586.46,310.13 585.16,307.07 583.49,305.06 583.13,302.83 581.23,300.35 580.52,296.86 581.65,294.41 581.33,291.32 584.82,291.31 588.85,292.2 590.01,287.77 593.71,285.54 596.46,284.9 595.15,282.36 593.16,279.55 592.13,277.14 591.58,274.96 589.87,272.85 588.45,269.69 588.73,265.19 587.61,262.18 586.42,260.38 585.56,257.41 584.41,255.23 582.41,252.63 582.66,249.26 583.93,245.95 585.11,244.09 586.54,241.81 587.48,238.85 588.51,236.5Z" fill="rgb(18,39,233)"/>
<path d="M681.03,198.48 680.14,195.19 679.69,191.43 677.8,187.78 678.38,183.96 679.55,180.92 680.13,177.49 682.06,177.17 685,176 687.86,175.02 690.82,174.24 693.55,174.05 694.94,176.26 696.32,178.78 699.59,179.23 702.8,180 706.38,180.09 709.83,179.01 711.38,175.9 711.47,173.92 712.2,171.16 715.65,168.79 716.89,167.45 720.2,165.16 722.51,164.95 725.98,164.42 729.05,163.57 732.14,163.42 735.27,162.43 737.7,162.7 741.49,161.84 744.48,161.19 747.27,161.38 750.33,159.91 751.81,159.16 755.05,158.93 757.34,157.46 760.38,157.87 763.66,156.8 766.66,156.25 770.55,155.23 768.83,157.78 767.92,161.08 769.63,164.6 771.54,167.22 772.99,170.72 775.16,172.61 775.83,176.07 777.32,178.47 780.51,181.58 782.87,183.58 784.95,186.61 783.24,187.05 779.89,187.38 777.61,189.05 773.98,189.14 771.23,190.19 768.26,189.28 765.33,187.23 763.43,190.43 762.57,193.76 759.36,196.09 756.86,196.48 754.8,198.89 752.55,202.63 755.07,204.42 756.62,206.14 755,208.82 752.75,211.12 753.65,213.94 755.12,216.43 756.62,219.04 758.41,220.71 759.77,222.85 758.24,225.34 755.9,227.52 752.92,229.09 750.41,230.31 747.72,230.9 745.56,233.17 744.77,236.37 741.09,236.86 737.48,237.26 733.8,238.95 731.1,240.93 728.8,242.4 725.18,244.7 724.28,247.86 722.31,250.41 720.91,252.59 720.16,254.91 718.08,257.12 717.25,259.69 714.06,260.73 710.67,261.75 707.73,262.19 706.29,259.75 703.67,257.56 702.12,254.41 701.37,252.88 698.75,253.78 694.7,253.42 690.97,253.88 687.83,254.96 687.15,251.92 685.19,250.5 684.32,246.79 683.81,244.95 683.39,241.91 682.24,237.83 683.77,234.86 686.33,231.33 687.18,227.64 687.69,225.54 687.56,222.55 686.61,218.97 686.05,217.32 686.13,213.88 688.08,211.31 688.62,207.78 687.2,202.19 684.48,200.44Z" fill="rgb(50,235,192)"/>
<path d="M784.95,186.61 789.95,186.88 793.65,186.55 796.55,187.17 794.5,190.96 793.52,193.9 793.13,196.61 792.3,199.71 790.56,202.4 787.77,203.66 786.48,205.3 784.74,207.7 783.85,209.45 781.89,212.21 780.12,214.05 781.89,215.78 782.88,217.34 785.27,219.75 786.75,223.43 787.25,226.32 787.23,229.63 785.28,232.16 784.84,234.94 786.04,238.07 787.96,239.6 788.64,242.19 789.72,245.3 792.54,248.08 793.42,249.97 796.34,249.26 798.41,248.33 801.41,247.3 804.92,247.16 807.86,246.74 809.89,247.69 813.88,248.34 815.46,250.21 816.09,254 818.08,256.45 819.31,258.87 819.67,261.78 818.09,262.9 814.35,263.44 812.38,264.72 809.85,266.77 806.76,267.86 803.54,270.1 801.42,272.39 797.75,273.86 795.24,275.38 792.14,277.37 788.62,277.8 786.1,280.24 784.78,283.77 782.42,286.08 782.19,288.99 781.9,291.83 781.33,295.26 781.68,298.17 782.2,302.77 783.59,304.3 785.41,307.31 787.66,310.3 790.99,310.86 793.82,312.98 793.56,316.59 792.4,319.01 791.39,321.27 790,325.29 785.25,326.36 783.41,324.27 782.82,321.3 781.03,316.24 778.4,315.56 776.11,315.32 772.74,315.37 770.15,315.14 766.84,314.74 763.8,314.02 759.62,314.84 756.2,315.25 753.77,317.54 750.17,318.87 745.23,319.68 743.17,319.01 740.25,318.32 734.99,316.95 733.18,314.66 730.89,313 728.42,310.99 726.48,309.62 723.22,308.62 721,306.29 718.34,305.03 715.25,303.9 712.15,301.07 709.71,298.91 708.1,297.7 706.33,295.23 703.97,293.93 700.54,292.57 698.13,290.3 696.29,288.94 695.23,286.73 694.06,283.46 694.05,281.51 694.01,278.33 692.75,275.25 692.35,272.65 693.33,268.05 693.78,265.18 696.3,262.28 697.85,259.64 698.22,257.24 699.56,255.66 701.37,252.88 702.12,254.41 703.67,257.56 706.29,259.75 707.73,262.19 710.67,261.75 714.06,260.73 717.25,259.69 718.08,257.12 720.16,254.91 720.91,252.59 722.31,250.41 724.28,247.86 725.18,244.7 728.8,242.4 731.1,240.93 733.8,238.95 737.48,237.26 741.09,236.86 744.77,236.37 745.56,233.17 747.72,230.9 750.41,230.31 752.92,229.09 755.9,227.52 758.24,225.34 759.77,222.85 758.41,220.71 756.62,219.04 755.12,216.43 753.65,213.94 752.75,211.12 755,208.82 756.62,206.14 755.07,204.42 752.55,202.63 754.8,198.89 756.86,196.48 759.36,196.09 762.57,193.76 763.43,190.43 765.33,187.23 768.26,189.28 771.23,190.19 773.98,189.14 777.61,189.05 779.89,187.38 783.24,187.05Z" fill="rgb(34,233,131)"/>
<path d="M796.55,187.17 799.18,188 801.4,188.65 804.91,188.96 808.61,189.63 811.84,189.77 815.19,189.75 817.62,190.12 820.66,190.65 823.84,191.09 827.37,191.62 831.9,192.05 834.64,192.31 837.45,192.77 840.54,191.87 844.3,193.33 847.24,192.87 850.13,192.79 849.73,195.28 849.86,198.86 847.26,199.93 845.02,201.43 843.23,202.91 840.01,205.24 837.56,207.21 834.76,210.15 836.52,215.26 838.89,215.43 842.65,216.23 845.85,218.54 849.05,219.69 847.71,223.8 846.06,226.27 844.02,228.08 842.76,229.95 842.39,235.04 844.88,235.31 848.42,235.66 847.59,238.4 847.28,241.6 846.15,246.24 849.48,248.22 851.3,248.7 854.83,251.38 857.46,252.39 859.29,254.7 862.69,257.68 864.76,260.66 861.57,264 855.96,262.76 855.01,259.05 853.62,256.09 851.37,254.48 849.89,252.72 847.8,251.95 844.98,249.75 843.89,252.49 842.39,254.98 838.89,256.71 836.45,257.46 833.38,257.5 830.47,258.49 827.72,259.65 825.58,260.91 822.12,261.29 819.67,261.78 819.31,258.87 818.08,256.45 816.09,254 815.46,250.21 813.88,248.34 809.89,247.69 807.86,246.74 804.92,247.16 801.41,247.3 798.41,248.33 796.34,249.26 793.42,249.97 792.54,248.08 789.72,245.3 788.64,242.19 787.96,239.6 786.04,238.07 784.84,234.94 785.28,232.16 787.23,229.63 787.25,226.32 786.75,223.43 785.27,219.75 782.88,217.34 781.89,215.78 780.12,214.05 781.89,212.21 783.85,209.45 784.74,207.7 786.48,205.3 787.77,203.66 790.56,202.4 792.3,199.71 793.13,196.61 793.52,193.9 794.5,190.96Z" fill="rgb(68,239,48)"/>
<path d="M616.73,338.57 619.99,337.31 622.24,334.11 622.02,331.29 622.69,327.86 621.22,323.78 621.07,319.88 622.4,317.4 623.48,314.74 625.26,312.66 627.18,309.79 630.44,308.82 632.32,308.17 636.14,306.66 638.53,305.98 641.21,307.81 644.87,308.75 650.04,307.78 653.53,306.45 656.56,304.98 658.63,307.19 660.33,310 663.07,311.63 665.3,312.28 668.64,313.08 672.27,312.63 675.69,313.53 677.2,314.73 679.72,315.18 681.96,317.22 684.57,318.84 686.01,320.03 690.04,319.06 692.27,318.45 695.4,318.55 697.01,316.74 700.07,315.88 702.48,316.45 704.94,318.21 707.19,318.77 709.99,318.56 711.76,316.58 715.34,316.45 718.2,317.2 722.08,316.71 724.94,317.27 728.85,317.25 731.4,316.93 734.99,316.95 740.25,318.32 743.17,319.01 745.23,319.68 750.17,318.87 753.77,317.54 756.2,315.25 759.62,314.84 763.8,314.02 766.84,314.74 770.15,315.14 772.74,315.37 776.11,315.32 778.4,315.56 781.03,316.24 781.18,318.62 780.99,321.42 779.9,325.13 780.05,327.87 780.98,331.74 781.27,334.42 781.3,337.87 781.06,340.83 781.85,343.76 782.59,347.25 782.8,351.02 784.06,353.96 784.65,357.57 786.42,359.94 787.03,362.29 788.27,365.47 789.72,367.43 792.27,370.39 792.53,372.79 795.1,375.01 796.39,377.54 798.85,379.24 800.54,381.31 801.18,384.77 803.5,386.15 805.54,388.5 807.88,390.68 807.13,394.44 806.6,396.18 805.63,399.69 804.52,402.98 800.94,404.11 799.32,401.05 797.21,399.07 793.44,400.46 788.24,402.06 786.77,403.65 784.48,406.51 781.31,407.74 778.3,409.65 775.1,410.21 772.5,409.79 768.85,409.13 765.74,409.18 763.29,408.32 760.66,407.24 758.55,405.63 756.85,403.94 754.37,402.9 752.12,400.28 749.62,397.57 748.35,393.92 748.81,391.73 750.05,389.79 751.09,386.42 748.39,385.96 746.13,384.2 743.29,382.7 740.43,381.35 738.63,380.19 734.6,378.37 731.9,379.17 728.57,381.76 725.36,382.09 723.34,383.64 720.76,384.41 716.98,385.32 713.57,385.78 711.42,386.4 708.21,388.17 705.34,387.68 703.05,386.82 700.97,384.5 698.34,384.57 695.39,384.86 690.67,385.29 688.59,383.99 685.94,380.91 683.61,379.59 680.65,377.91 678.07,376.85 676.32,375.61 670.95,374.02 668.01,372.21 666.2,369.5 662.76,367.27 661.01,366.52 658.35,365.8 656.49,363.15 655.02,361.76 651.27,360.93 648.43,361.27 644.85,359.65 639.8,361.52 637.56,359.24 634.74,357.3 632.96,356.26 631.06,353.55 630.09,351.55 628.68,348.83 625.79,347.23 622.57,345.3 617.18,343.52Z" fill="rgb(162,15,210)"/>
<path d="M524.73,399.99 526.44,401.77 527.74,404.98 530.5,403.48 533,403.66 534.98,402.77 538.98,401.12 541.23,401.42 544.88,400.32 547.47,399.47 550.21,397.48 552.87,396.79 554.87,394.92 556.66,393.17 559.5,391.81 561.16,389.98 563.09,386.62 563.89,383.41 564.94,381.18 567.56,379.82 568.41,377.83 571.05,374.3 573.44,372.2 574.82,369.89 577.37,367.2 579.77,366.18 582.38,363.76 585.37,362.38 588.57,361.31 591.12,359.68 594.77,360.06 597.82,360.13 600.28,360.37 603.35,360.38 607.87,361.06 610.61,362.44 613.14,365.32 615.09,366.55 617.7,364.82 620.27,362.52 622.54,363.72 624.81,364.36 627.77,365.18 630.73,367.49 632.63,369.6 634.67,371.1 637.88,373.35 639.29,374.34 642.44,376.47 644.66,377.74 646.92,380.34 648.03,381.64 649.64,383.93 652.17,387.12 654.66,385.13 657.42,383.97 660.89,385.98 662.15,382.7 659.71,379.75 657.4,377.86 654.49,374.33 652.42,372.28 651.14,370.34 649.58,367.94 647.51,365.34 645.94,362.55 644.85,359.65 639.8,361.52 637.56,359.24 634.74,357.3 632.96,356.26 631.06,353.55 630.09,351.55 628.68,348.83 625.79,347.23 622.57,345.3 617.18,343.52 616.73,338.57 615.94,341.83 615.02,343.59 609.83,345.14 606.92,343.12 605.12,341.26 603.67,342.97 601.53,345.34 599.78,347.35 597.39,349.26 595.09,350.4 592.77,351.12 590.65,349.62 587.38,347.67 585.61,349.9 582.93,351.06 580.07,352.84 575.98,353.63 572.19,353.73 568.71,353.03 566.1,352.87 564.89,355.57 563.74,357.09 562.52,359.98 561.25,362.42 559.38,364.79 557.26,366.83 556.36,370.24 554.92,372.93 553.64,375.97 551.19,378.21 549.03,380.94 546.48,380.41 542.63,380.52 540.16,380.38 535.3,381.35 533.82,383.04 532.41,386.01 530.46,389.72 528.92,392.14 527.15,394.52 526.04,396.88Z" fill="rgb(219,21,209)"/>
<path d="M644.85,359.65 647.79,357.51 651.05,355.7 654.05,355.32 657.62,356.61 658.61,358.08 659.72,361.28 663.75,362.48 665.98,363.76 669.71,365.73 672.67,367.76 675.42,368.45 678.46,370.13 682.32,371.81 685.3,373.69 686.42,375.37 689.76,377.63 690.98,379.05 694.12,378.07 697.75,379.02 700.63,379.25 701.78,380.54 704.89,380.96 709.39,381.15 712.46,380.03 716.6,380.1 720.38,381.13 722.38,379.31 726.15,377.72 729.08,376.65 731.4,374.98 734.12,373.11 735.93,371.66 739.21,374.2 742.7,374.94 744.75,376.77 747.25,378.98 750.02,379.25 753.51,379.65 752.86,382.16 751.01,385.34 749.77,387.58 752.11,391.22 753.58,393.53 755.82,396.08 757.81,397.87 760.17,399.98 762.6,400.69 765.21,402.18 767.87,403.5 771.37,404.9 774.72,405.5 777.53,405.75 781.33,406.3 784.73,406.76 786.06,411.13 783.31,412.73 781.41,415.33 780.2,416.25 778.84,419.04 776.95,420.94 776.33,423.44 773.92,427.43 772.67,429.75 773.92,433.39 774.76,436.2 778.33,438 781.14,440.34 779.32,442.2 776.45,443.57 773.52,446.15 772.26,447.22 769.75,449.76 767.53,453.5 766.55,456.07 767.6,459.01 767.37,461.82 768.44,464.86 768.77,467.86 768.84,470.98 768.52,473.41 767.44,475.91 763.48,476.02 760.16,478.65 760.55,482.55 761.08,484.65 759.72,487.81 757.27,489.9 754.71,491.42 752.31,493.83 749.77,496.62 749.87,499.65 748.57,502.21 747.2,504.82 744.05,506.9 742.17,508.4 742.02,509.15 738.52,508.6 734.7,508.06 729.83,507.98 726.53,511.32 722.43,508.02 724.68,505.36 727.63,502.43 727.48,498.83 726.61,496.3 724.71,494.13 722.69,491.85 719.84,490.1 717.52,487.84 713.67,486.45 711.12,484.01 707.86,482.4 704.96,480.87 703.79,478.75 702.26,475.57 701.41,472.41 698.76,470.51 695.16,468.61 689.71,469.26 687.73,465.37 688.99,461.46 689.28,457.42 687.88,454.4 687.26,450 686.64,447.14 686.12,444.43 685.33,442.3 683.31,440.51 683.01,437.14 681.12,434.92 679.96,432.36 679.43,430.72 677.35,427.46 676.8,423.13 676.44,419.85 676.29,416.26 675.14,412.22 674.68,409.2 673.92,405.37 672.63,402.13 672.3,399.64 671.53,397.68 669.98,394.54 667.87,391.57 665.52,388.05 663.73,386.62 661.79,382.05 659.46,379.5 657.4,377.86 656.3,374.41 654.04,372.32 651.35,369.94 650.07,367.35 647.48,364.51 646.1,362.52ZM667.33,481.46 670.23,479.5 672.83,478.86 676.54,479.86 679.06,478.19 681.02,476 684.4,474.74 685.4,479.8 685,482.36 684.18,485.76 680.02,483.95 676.47,484.08 673.47,485.28 668.46,484.92ZM649.28,460.32 651.29,459.8 652.35,462.24 651.08,465.13 649.43,464.6ZM664.31,495.27 665.94,493.55 666.75,497.13 663.89,497.46ZM709.3,510.92 711.74,510.2 713.32,513.01 712.48,515.53 710.49,514.2Z" fill="rgb(239,110,81)"/>
<path d="M808.81,388.78 811.75,390.68 815.05,392.43 817.42,393.81 820.01,395.23 823.06,397.3 824.75,400 828.01,402.08 829.98,402.79 831.83,404.16 835.2,406.43 837.32,407.23 839.96,408.71 842.31,410.58 844.85,410.93 848.74,411.12 852.66,411.64 854.39,414.17 857.27,417.15 858,419.9 859.25,421.99 860.96,424.6 861.5,427.51 862.9,429.43 863.18,433.23 864.44,434.25 866.13,437.74 868.18,439.84 868.26,442.81 870.38,445.14 871.03,447.82 872.38,450.3 873.85,453.66 874.76,456.61 874.76,458.87 876.43,461.97 876.81,466.48 874.01,468.16 872.35,468.11 869.76,469.98 866.68,471.72 863.69,472.77 861.51,474.26 858.93,475.03 856.17,476 852.67,477.55 850.15,479.96 846.46,482.32 842.7,480.33 840.32,479.07 840.51,476.11 841.18,472.81 838.69,470.71 835.88,469.79 833.24,468.77 831.62,466.34 825.94,467.85 824.25,465.41 822.42,462.2 822.35,460.27 821.49,457.93 819.89,455.21 819.72,452.7 818.16,450.13 817.58,447.71 816.24,443.78 816.08,440.38 813.91,437.57 812.4,435.2 812.27,431.21 811.46,427.65 806.6,429.06 803.36,427.38 800.09,425.18 797.5,423.85 794.64,422.68 792.84,421.76 789.72,419.63 787.83,417.45 782.32,417.41 780.2,416.25 781.41,415.33 783.31,412.73 786.06,411.13 784.73,406.76 787.17,402.61 789.77,398.38 793.04,397.43 794.84,395.32 796.88,395.25 799.99,393.51 801.67,395.45 803.46,397.34 805.05,395.39 807.62,393.71Z" fill="rgb(120,204,137)"/>
<path d="M780.2,416.25 782.32,417.41 787.83,417.45 789.72,419.63 792.84,421.76 794.64,422.68 797.5,423.85 800.09,425.18 803.36,427.38 806.6,429.06 811.46,427.65 812.27,431.21 812.4,435.2 813.91,437.57 816.08,440.38 816.24,443.78 817.58,447.71 818.16,450.13 819.72,452.7 819.89,455.21 821.49,457.93 822.35,460.27 822.42,462.2 824.25,465.41 825.94,467.85 831.62,466.34 833.24,468.77 835.88,469.79 838.69,470.71 841.18,472.81 840.51,476.11 840.32,479.07 840.32,479.07 837.46,481.41 836.23,483.86 832.72,485.89 830.12,487.37 827.89,488.34 825.57,489.46 822.48,489.66 819.78,492.34 816.5,493.73 814.66,495.2 812.41,497.97 810.92,500.3 808.39,502.69 806.39,505.15 802.32,507.95 798.77,504.94 796.74,501.85 794.74,499.75 790.04,500.37 787.86,496.45 786.03,493.93 784,491.97 782.58,488.76 778.97,488.69 775.95,487.29 772.84,486.98 770.23,484.63 769.08,482.58 768.38,479.35 767.44,475.91 768.52,473.41 768.84,470.98 768.77,467.86 768.44,464.86 767.37,461.82 767.6,459.01 766.55,456.07 767.53,453.5 769.75,449.76 772.26,447.22 773.52,446.15 776.45,443.57 779.32,442.2 781.14,440.34 778.33,438 774.76,436.2 773.92,433.39 772.67,429.75 773.92,427.43 776.33,423.44 776.95,420.94 778.84,419.04Z" fill="rgb(160,107,220)"/>
<path d="M742.02,509.15 742.17,508.4 744.05,506.9 747.2,504.82 748.57,502.21 749.87,499.65 749.77,496.62 752.31,493.83 754.71,491.42 757.27,489.9 759.72,487.81 761.08,484.65 760.55,482.55 760.16,478.65 763.48,476.02 767.44,475.91 768.38,479.35 769.08,482.58 770.23,484.63 772.84,486.98 775.95,487.29 778.97,488.69 782.58,488.76 784,491.97 786.03,493.93 787.86,496.45 790.04,500.37 794.74,499.75 796.74,501.85 798.77,504.94 802.32,507.95 806.39,505.15 808.39,502.69 810.92,500.3 812.41,497.97 814.66,495.2 816.5,493.73 819.78,492.34 822.48,489.66 825.57,489.46 827.89,488.34 830.12,487.37 832.72,485.89 836.23,483.86 837.46,481.41 840.32,479.07 842.7,480.33 846.46,482.32 848.04,485.23 848.75,487.23 846.81,489.1 845.28,491.62 841.99,491.42 838.95,491.1 837.61,494.05 837.82,497.83 836.52,500.71 835.22,502.78 836.66,505.6 838.94,507.57 840.03,510.75 841.5,513.42 842.59,515.94 844.88,518.42 848.6,520.95 845.02,523.47 842.28,524.45 838.39,523.91 836.7,525.28 833.96,526.04 831.15,529.76 833.43,533.97 836.12,535.01 839.82,536 842.4,538.23 845.32,538.91 847.94,540.92 850.04,543.5 851.52,544.99 853.51,547.76 856.44,548.14 860.01,548.77 862.04,550.08 863.98,552.2 866.66,551.8 869.98,550.1 872.73,550.23 876.5,551.36 879.47,552.88 882.49,554.75 886.44,556.45 886.7,559.69 886.41,562.36 887,566.19 888.41,568.64 887.84,571.73 886.84,574.5 882.5,576.11 881.97,579.58 881.57,582.6 879.02,585.58 877.21,587.69 876.42,590.82 873.75,589.52 869.75,589.72 866.05,591.41 862.46,590.01 859.66,588.58 856.03,588.75 852.33,587.77 849.71,588.07 847.72,588.61 845.34,590.34 843.05,590.96 839.37,591.61 837.37,592.74 834.99,591.37 833.59,588.59 830.72,586.05 828.4,583.76 826.3,583.1 823.48,580.55 820.09,580.27 818.07,578.68 814.26,577.67 812.25,577.79 810.49,576.11 808.42,572.85 806.1,571.42 803.48,569.02 801.63,566.39 800.02,564.81 797.67,563.08 795.43,561.39 793.57,558.94 790.69,556.33 787.74,555.36 785.28,552.37 783.72,549.1 781.96,546.49 779.52,544.84 777.34,542.14 775.26,540.94 772.19,539.31 769.8,537.3 767.54,536.71 763.99,534.71 762.76,532.33 761.15,530.16 758.84,528.71 758.21,526.63 756.68,524.01 755.33,521.42 752.61,519.35 750.75,516.89 748.45,514.99 746.86,512.7 744.27,510.91Z" fill="rgb(179,235,59)"/>
<path d="M876.81,466.48 877.28,468.95 878.84,471.59 879.71,475.05 881.02,477.7 883.79,481.32 885.38,483.98 886.46,485.23 888.19,488.82 890.9,490.7 892.5,492.3 895.31,493.8 897.34,496.59 899.75,497.93 901.3,499.94 903.42,502.08 905.85,503.15 907.98,505.66 909.71,507.7 911.54,508.96 913.77,510.26 916.82,512.87 919.12,513.97 922.27,515.8 925.13,517.17 926.8,520.52 927.88,522.28 928.26,525.5 927.22,528.03 924.97,530.37 923.93,532.33 921.7,534.93 919.88,537.8 918.74,539.89 916.56,542.75 914.72,545.16 914.08,547.47 912.91,544.7 910.9,541.18 908.12,540.8 905.03,540.24 902.96,541.57 901.49,543.68 898.36,545.63 894.74,545.93 893.58,551.24 891.61,553.23 888.95,555.21 886.44,556.45 882.49,554.75 879.47,552.88 876.5,551.36 872.73,550.23 869.98,550.1 866.66,551.8 863.98,552.2 862.04,550.08 860.01,548.77 856.44,548.14 853.51,547.76 851.52,544.99 850.04,543.5 847.94,540.92 845.32,538.91 842.4,538.23 839.82,536 836.12,535.01 833.43,533.97 831.15,529.76 833.96,526.04 836.7,525.28 838.39,523.91 842.28,524.45 845.02,523.47 848.6,520.95 844.88,518.42 842.59,515.94 841.5,513.42 840.03,510.75 838.94,507.57 836.66,505.6 835.22,502.78 836.52,500.71 837.82,497.83 837.61,494.05 838.95,491.1 841.99,491.42 845.28,491.62 846.81,489.1 848.75,487.23 848.04,485.23 846.46,482.32 850.15,479.96 852.67,477.55 856.17,476 858.93,475.03 861.51,474.26 863.69,472.77 866.68,471.72 869.76,469.98 872.35,468.11 874.01,468.16Z" fill="rgb(232,193,76)"/>
<path d="M928.26,525.5 931.37,525.96 935.08,527.22 937.03,529.29 940.01,529.3 942.2,530.89 945.29,532.65 949.15,533.41 950.85,536.18 951.4,540.02 951.97,544.38 952.25,547.6 951.41,549.5 950.48,552.14 948.45,555.15 947.07,557.87 944.65,559.76 945.64,563.66 946.54,566.1 945.6,569.8 945.14,572.59 942.21,572.17 938.84,573.04 934.88,573.08 932.17,573.62 929.28,574.52 926.39,574.88 922.58,576.39 920.12,577.14 916.47,576.85 913.48,574.86 910.37,573.56 907.74,572.73 905.43,570.94 902.31,570.98 900.07,569.97 897.27,570.96 894.02,571.32 892.94,574.47 890.97,577.37 888.59,575.25 886.84,574.5 887.84,571.73 888.41,568.64 887,566.19 886.41,562.36 886.7,559.69 886.44,556.45 888.95,555.21 891.61,553.23 893.58,551.24 894.74,545.93 898.36,545.63 901.49,543.68 902.96,541.57 905.03,540.24 908.12,540.8 910.9,541.18 912.91,544.7 914.08,547.47 914.72,545.16 916.56,542.75 918.74,539.89 919.88,537.8 921.7,534.93 923.93,532.33 924.97,530.37 927.22,528.03Z" fill="rgb(231,108,155)"/>
<path d="M886.84,574.5 888.59,575.25 890.97,577.37 892.94,574.47 894.02,571.32 897.27,570.96 900.07,569.97 902.31,570.98 905.43,570.94 907.74,572.73 910.37,573.56 913.48,574.86 916.47,576.85 920.12,577.14 922.58,576.39 926.39,574.88 929.18,573.57 932.75,571.41 934.51,571.41 938.24,569.95 940.54,569.15 942.74,570.1 946.23,569.09 948.59,569.87 949.25,572.83 949.8,576.12 952.28,578.5 953.59,581.49 955.75,583.3 958.68,584.77 958.88,588.02 960.06,590.99 962.2,592.3 965.23,594.51 968.95,595 972.3,596.38 975.18,596.57 978.52,596.82 977.97,600.16 978.84,602.58 977.74,606.27 976.51,608.84 973.82,610.4 969.64,612.63 968.4,616.43 969.43,620.07 971.29,622.13 973.01,625.4 976,627.39 976.95,630.59 977.36,633.87 980.4,636.32 982.61,638.55 984.49,641.41 985.57,643.47 987.7,645.11 989.32,647.49 992.39,649.83 994.48,652.96 996.41,656.04 994.98,660.12 993.55,662.3 992.64,665.7 992.79,668.11 991.19,670.38 990.22,672.86 985.37,672.45 982.24,673.32 979.64,675.3 975.88,677.39 973.26,676.7 970.1,676.58 967.49,672.58 965.69,670.18 962.35,669.02 958.89,666.93 955.88,666.21 953.46,664.91 950.17,663.61 946.89,661.2 944.87,660.35 946.86,656.61 947.82,653.48 949.66,649.81 947.7,647.54 946.58,643.7 943.78,641.07 942.4,638.93 940.77,636.71 938.9,634.92 937.26,632.27 935.3,631.39 932.75,629.89 929.24,631.58 926.55,632.84 923.41,633.86 919.97,635.31 917.57,635.53 914.1,637.14 911.22,636.09 913.63,633.18 914.89,631.54 916.17,628.78 917.5,626.57 914.99,624.75 912.82,622.74 909.02,621.72 906.21,620.37 902.56,621.37 900.31,620.9 895.19,622.19 893.57,620.51 892.64,617.61 890.78,615.03 889.82,611.28 888.65,607.75 886.61,605.27 884.62,602.02 882.76,598.98 880.27,597.29 879.61,594.63 877.45,592.41 876.42,590.82 877.21,587.69 879.02,585.58 881.57,582.6 881.97,579.58 882.5,576.11ZM883.34,626.65 886.4,625.93 889.33,627.84 889.02,630.5 884.97,631.51 882.63,629.48Z" fill="rgb(163,225,124)"/>
<path d="M959.83,533.46 963.54,533.23 966.96,533.11 969.74,532.87 972.6,532.7 975.03,532.37 978.58,532.24 981.68,531.68 985.18,530.31 988.13,530.44 990.12,530.13 993.32,529.38 996.37,528.97 999.63,528.38 1003.63,528.45 1005.77,530.63 1009,532.22 1009.9,535.55 1010.62,538.39 1008.42,541.48 1007.34,543.78 1004.36,545.98 1002.33,547.15 1000.85,549.36 998.67,550.43 996.45,552.25 994.94,555.34 994.22,557.87 996.12,560.16 997.59,563.61 999.67,565.25 1002.07,566.71 1004.7,568.12 1007.4,568.84 1010.59,569.49 1012.19,571.31 1015.27,572.23 1017.42,573.73 1020.27,573.31 1022.16,574.99 1024.86,575.99 1027.66,577.04 1030.07,577.22 1032.37,578.74 1035.47,579.02 1037.02,580.48 1040.03,581.35 1043.19,581.51 1045.56,583.36 1047.06,583.37 1050.01,584.82 1052.6,584.95 1054.88,586.1 1057.73,586.23 1059.44,587.34 1062.25,587.78 1065.84,588.97 1068.36,590.76 1071.59,592.35 1074.46,593.85 1076.49,595.35 1079.03,597.51 1080.52,598.36 1083.48,600.01 1086.11,602.25 1088.48,602.71 1092.81,604.26 1094.69,605.94 1097.88,607.5 1099.83,608.25 1103.08,609.74 1104.89,610.19 1108.24,611.45 1110.45,611.62 1112.75,612.25 1114.87,613.19 1118.36,614.57 1121.53,615.12 1122.15,618.82 1123.67,621.24 1125.78,622.18 1127.71,623.9 1129.96,626.17 1131.83,627.37 1134.17,628.86 1135.96,630.28 1138.7,632.63 1141.43,634.66 1143.94,636.39 1146.35,638.77 1148.64,641 1149.67,643 1151.15,644.88 1152.37,648.08 1154.67,651.47 1154.08,654.57 1154.08,658.58 1152.93,662.12 1151.36,665.08 1151.32,669.22 1150.02,672.76 1149.42,674.54 1148.43,677.68 1146.98,677 1143.57,676.44 1140.74,674.62 1138.62,673.37 1136,673.25 1133.64,671.43 1130.35,668.63 1128.17,666.98 1126.16,663.77 1125,660.36 1123.74,657.75 1121.91,654.97 1120.38,651.76 1119.52,648.65 1118.07,646.85 1116.58,643.67 1113.14,642.8 1109.05,642.92 1105.47,642.86 1102.35,644.04 1098.76,644.72 1096.57,644.24 1092.12,643.73 1088.72,642.8 1086.36,640.98 1084.22,640.56 1081.28,638.47 1078.19,636.19 1076.12,633.9 1073.86,632.04 1071.04,631.41 1067.42,632.35 1065.23,632.51 1061.9,634.57 1060.1,636.5 1057.59,639.07 1056.61,640.45 1053.93,639.11 1052.64,636.49 1050.14,632.67 1048.43,629.8 1048.36,626.06 1047.29,622.76 1045.92,617.8 1043.3,615.81 1041.19,615.15 1038.86,616.34 1035.2,616.29 1031.14,619.66 1028.04,618.49 1026.54,616.24 1024.9,614.66 1022.48,613.47 1019.65,611.52 1017.1,609.14 1015.26,606.56 1012.14,604.8 1010.02,604.39 1006.82,604.13 1005.09,602.77 1004.1,597.57 1001.77,595.51 1000.36,593.39 996.54,591.44 993.99,591.87 990.9,594 988.71,593.73 984.64,594.16 981.65,596.04 978.52,596.82 975.18,596.57 972.3,596.38 968.95,595 965.23,594.51 962.2,592.3 960.06,590.99 958.88,588.02 958.68,584.77 955.75,583.3 953.59,581.49 952.28,578.5 949.8,576.12 949.25,572.83 948.59,569.87 945.26,566.91 940.54,569.15 942.77,566.35 941.27,563.45 941.12,560.02 944.16,558.06 945.98,555.17 947.96,552.19 948.14,550.05 950.19,547.68 949.63,544.49 948.62,539.73 949.21,537.04 949.15,533.41 952.33,533.52 955.37,533.11 957.6,534.41Z" fill="rgb(63,175,231)"/>
<path d="M978.52,596.82 981.65,596.04 984.64,594.16 988.71,593.73 990.9,594 993.99,591.87 996.54,591.44 1000.36,593.39 1001.77,595.51 1004.1,597.57 1005.09,602.77 1006.82,604.13 1010.02,604.39 1012.14,604.8 1015.26,606.56 1017.1,609.14 1019.65,611.52 1022.48,613.47 1024.9,614.66 1026.54,616.24 1028.04,618.49 1031.14,619.66 1035.2,616.29 1038.86,616.34 1041.19,615.15 1043.3,615.81 1045.92,617.8 1047.29,622.76 1048.36,626.06 1048.43,629.8 1050.14,632.67 1052.64,636.49 1053.93,639.11 1056.61,640.45 1055.7,644.24 1053.84,647.13 1051.94,649.59 1050.75,652.49 1049.97,655.33 1048.92,658.01 1047.61,659.6 1046.08,662.51 1045.23,663.18 1042.69,663.19 1039.63,663.31 1037.19,663.76 1034.05,664.12 1032.73,666.6 1032.48,669.87 1031.65,673.51 1030.92,675.87 1031.29,678.53 1028.53,680.04 1024.71,680.3 1021.93,680.38 1018.76,681.24 1013.54,680.9 1011.94,678.35 1011.61,676.09 1008.07,676.18 1005.25,676.27 1000.09,677.87 996.62,680.24 994.87,677.69 992.6,674.68 990.22,672.86 991.19,670.38 992.79,668.11 992.64,665.7 993.55,662.3 994.98,660.12 996.41,656.04 994.48,652.96 992.39,649.83 989.32,647.49 987.7,645.11 985.57,643.47 984.49,641.41 982.61,638.55 980.4,636.32 977.36,633.87 976.95,630.59 976,627.39 973.01,625.4 971.29,622.13 969.43,620.07 968.4,616.43 969.64,612.63 973.82,610.4 976.51,608.84 977.74,606.27 978.84,602.58 977.97,600.16Z" fill="rgb(48,218,227)"/>
<path d="M1045.23,663.18 1045.24,666.46 1046.4,669.93 1045.74,673.58 1044.69,677.33 1043.68,679.53 1042.71,681.94 1042.26,684.88 1041.68,688.08 1039.81,691.32 1041.15,694.29 1042.67,697.48 1045.49,698.08 1048.98,700.17 1052.2,700.25 1054.84,699.78 1058.1,700.29 1061.04,702.45 1063.82,704.87 1067.53,706.1 1071.04,708.3 1073.64,710.05 1076.06,712.43 1079.16,713.62 1079.36,716.98 1080.53,721.23 1078.96,723.89 1079.08,727.2 1079.59,730.23 1081.27,733.57 1081.96,739.01 1085.22,742.25 1085.38,743.84 1084.82,745.94 1083.04,748.61 1082.78,751.5 1078.91,750.92 1074.69,751 1071.62,751.86 1069.58,753.75 1066.27,755.25 1062.85,756.75 1059.7,758.91 1057.18,759.69 1055.14,762 1053.37,764.14 1050.88,766.33 1049.9,769.24 1049.65,772.58 1050.87,774.84 1052.39,778.81 1052.84,781.31 1052.8,784.98 1052.68,788.58 1051.64,792.04 1050.23,795.21 1047.95,796.59 1045.38,798.87 1044,800.35 1041.66,801.72 1039.29,804.68 1037.33,806.2 1036.1,808.01 1034.45,810.28 1032.15,812.35 1031.45,815.31 1031.38,817.19 1029.71,819.62 1029.04,823.12 1028.93,826.13 1027.6,828.08 1025.05,829.98 1021.19,830.14 1017.8,832.05 1014.21,832.26 1012.29,832.27 1008.95,832.45 1005.45,831.78 1002.86,829.89 1000.68,826.23 999.73,823.92 999.63,819.94 999.02,816.45 999.29,812.82 1000.36,809.85 1001.85,807.72 1004.5,805.96 1006.59,804.82 1007.06,802.54 1008.39,800.6 1009.9,797.58 1010.53,794.87 1011.27,792.36 1012.14,790.37 1013.13,787.21 1013.59,783.73 1010.55,782.4 1008.62,780.09 1009.95,774.83 1012.69,772.49 1016.32,771.21 1019.9,770.82 1024.08,770.96 1025.61,768.81 1028.49,766.48 1029.72,762.21 1030.25,758.89 1027.51,755.91 1026.46,753.48 1025.05,752.35 1023.55,749.99 1020.95,747.87 1020.78,745.01 1019.98,742.61 1018.55,740.15 1018.61,736.01 1017.49,732.65 1016.4,730.63 1015.72,727.59 1014.72,725.07 1014.3,722.24 1012.37,719.58 1011.27,717.2 1009.32,715.23 1009.09,712.06 1007.5,709.82 1005.4,707.18 1004.02,703.48 1003.11,700.39 1001.41,697.65 1000.55,695.32 1000.14,692.45 998.94,689.96 998.04,687.18 996.65,683.71 996.62,680.24 1000.09,677.87 1005.25,676.27 1008.07,676.18 1011.61,676.09 1011.94,678.35 1013.54,680.9 1018.76,681.24 1021.93,680.38 1024.71,680.3 1028.53,680.04 1031.29,678.53 1030.92,675.87 1031.65,673.51 1032.48,669.87 1032.73,666.6 1034.05,664.12 1037.19,663.76 1039.63,663.31 1042.69,663.19Z" fill="rgb(224,59,169)"/>
<path d="M997.65,806.2 992.68,805.84 989.12,807.52 986.39,810.03 982.55,811.69 980.17,812.8 976.32,813.77 975.2,808.95 974.76,811.21 973.71,815.19 971.96,816.91 968.62,818.06 965.36,817.46 962.8,816.47 959.87,816.35 956.18,816.29 953.15,817.57 949.98,818.88 946.91,821.31 944.03,822.47 940.54,823.84 937.25,825.94 934.67,827.57 932.91,828.49 929.89,828.99 925.75,828.94 922.35,830.09 918.73,830.45 914.83,831.18 911.9,830.18 907.65,830.45 903.62,830.65 899.95,831.73 898.17,833.42 894.34,834.36 892.53,835.27 887.2,836.01 884.41,833.85 881,832.23 878.8,830.49 876.29,828.45 873.56,826.59 868.89,827.17 867.02,824.78 864.52,823.39 862.7,819.62 859.6,818.54 856.59,821.73 851.55,820.92 847.61,824.11 846.21,829.02 843.81,830.39 841.03,832.85 836.2,833.53 834.29,831.62 832.37,830.33 830.69,826.33 829.55,823.4 826.93,822.81 826.07,824.61 825.04,827.26 823.16,829.36 819.73,831.05 817.46,832.97 815.32,833.5 813.19,836.62 812.17,838.38 811.21,842.51 811.4,845.19 810.79,849.82 811.32,853.7 812.24,856.48 814.06,859.06 816.4,861.08 819.01,862.83 821.12,864.75 823.98,867.61 825.94,868.92 830.23,868.83 834,867.35 836.58,868.08 839.71,869.09 842.53,870.34 846.13,872.23 849.42,872.72 853.4,874.1 855.91,874.8 857.54,876.46 859.89,879.1 862.35,880.18 864.48,881.6 867.57,883.83 869.83,885.75 873.01,885.88 874.86,887.67 877.3,889.03 881.38,891.37 883.67,892.39 886.87,894.77 889.94,896.42 892.02,897.21 894.26,898.3 897.78,899.15 901.27,900.48 904.03,900.84 908.15,899.41 911.12,899.79 914.65,900.88 918.81,900.99 922.05,902.77 925.01,905.35 926.84,907.66 927.69,908.62 930.34,910.97 932,914.14 933.5,917.68 935.09,920.19 937.5,921.94 941.62,922.68 945.16,923.81 947.91,925.56 950.59,926.19 952.55,927.42 955.95,926.29 959.95,926.07 962.66,926.49 966.56,928.25 968.38,928.1 971.51,929.56 973.47,930.34 976.75,927.24 975.69,925.01 974.9,922.16 975.1,919.97 976.61,916.4 978.12,913.29 980.16,910.33 981.28,908.83 984.01,906.62 986.03,902.82 982.72,898.6 983.92,894.66 981.46,893.31 978.58,892.7 977.93,889.44 976.73,887.39 980.01,885.11 977.96,883.09 976.34,881.46 973.84,878.59 971.04,876 969.9,872.54 970.34,868.98 970.81,865.55 972.52,862.27 973.08,860.21 974.56,858.23 974.8,855.31 974.91,852.42 975.81,849.39 976.05,845.93 977.62,843.11 978.74,841.94 980.17,838.63 981.13,835.98 983.74,833.54 985.13,831.52 986.42,828.76 988.15,826.05 989.86,822.25 991.25,819.39 992.83,815.93 993.74,813.72 995.34,811.44 996.05,808.44ZM781.77,926 784.65,925.22 788.65,927.65 790.74,931.15 789.06,934.01 785.29,932.66 782.73,929.62ZM947.5,786.11 951.07,786.33 952.15,788.7 949.01,788.96ZM953.4,791.1 957.2,791.06 957.82,794.48 955.73,796.32 953.92,794.03ZM956.89,798.66 959.15,797.92 960.83,800.93 958.03,802.06Z" fill="rgb(234,16,38)"/>
<path d="M616.83,595.76 620.97,596.85 623.25,600.38 626.28,601.96 629.74,605.28 633.2,607.28 635,611.32 637.87,614.31 640.05,616.9 636.72,619.95 635.15,621.73 639.25,623.31 642.91,624.02 646.34,625.15 645.26,629.24 646.42,631.06 647,634.2 648.23,639.33 649.49,640.87 649.78,644.14 652.21,648.24 653.36,651.85 651.6,654.29 650.76,657.16 648.92,659.04 648,662.26 645.23,666.35 642.1,670 641.94,673.8 642.7,678.31 645.47,681.89 647.32,684.47 646.66,686.69 646.31,689.74 645.35,693.19 645.93,696.08 645.86,699.75 645.93,702.7 645.59,705.92 645.06,708.37 644.23,710.83 644.15,713.27 644.09,715.68 644.35,718.83 643.19,722.01 643.65,724.66 643.4,727.39 642.3,730.69 642.39,734.3 642.09,736.66 641.17,741.98 641.48,744.77 640.27,747.24 639.67,750.29 639.34,755.25 636.92,759.11 635.3,755.83 632.54,755.17 629.74,753.63 627.77,753.2 625.27,751.25 622.52,750.07 619.64,749.05 616.97,750.4 615.21,750.95 611.22,752.18 607.89,756.37 607.16,759.72 608.37,764.04 604.96,767.9 602.7,769.31 601.03,772.15 596.93,774.72 593.12,772.98 589.33,771.67 585.02,774.85 583.16,771.86 580.82,768.22 580.74,766.06 579.14,762.81 574.71,759.92 572.94,755.68 569.96,751.95 568.61,748.83 570.88,745.09 571.89,741.73 571.28,740 569.83,736.96 569.44,732.15 572.17,728.27 573.15,725.98 573.8,722.72 573.65,720.37 573.96,716.81 575.19,711.62 576.98,708.67 578.92,705.27 579.82,700.73 577.93,698.98 574.28,700.2 571.85,697.82 570.98,692.62 570.48,688.78 573.88,685.78 574.63,680.63 575.73,678.33 575.19,674.92 574.29,671.71 573.84,668.64 571.03,665.15 569.83,659.99 569.18,655.29 566.27,651.06 563.86,647.33 560.64,645.07 557.87,647.88 556.45,644.76 558.72,640.72 556.98,636.01 558.77,631.2 559.56,628.66 560.33,626.36 559.06,622.17 559.63,616.68 561.64,612.98 563.64,609.3 567.04,606.72 568.77,609.03 566.9,611.73 564.06,612.51 562.9,615.8 562.2,620.34 562.29,623.73 565.1,626.28 568.74,627.14 571.71,628.79 573.7,628.93 579.33,628.26 582.66,626.06 584.89,624.73 586.68,622.95 589.47,621.66 591.77,621.12 595.87,617.88 597.97,613.71 599.6,611.76 602.1,610.91 604.27,608.84 606.2,606.82 610.03,605.14 613.25,603.22 614.2,598.06ZM560.08,753.67 563.2,751.9 565.61,752.94 565.12,756 563.38,758.88 561.17,757.31ZM567.88,758.42 569.61,758.83 572.66,758.08 574.38,762.37 574.38,764.84 573.1,768.16 571.37,769.79 570.99,767.14 568.88,765.33 568.72,762.44Z" fill="rgb(210,214,92)"/>
<ellipse cx="793.3" cy="391.3" rx="1.8" ry="2.4" transform="rotate(30 793.3 391.3)" fill="#fff"/>
<circle cx="678.2" cy="515" r="0.75" fill="#222"/>
<circle cx="723" cy="520" r="0.66" fill="#222"/>
<circle cx="654.5" cy="432.5" r="0.56" fill="#222"/>
<circle cx="664.5" cy="513" r="0.38" fill="#222"/>
<circle cx="710" cy="496.2" r="0.47" fill="#222"/>
<circle cx="969.2" cy="518" r="0.94" fill="#222"/>
<circle cx="982.5" cy="508.8" r="0.56" fill="#222"/>
<circle cx="798.8" cy="543.8" r="0.75" fill="#222"/>
<circle cx="811.2" cy="555.5" r="0.75" fill="#222"/>
<circle cx="792.5" cy="416.2" r="0.75" fill="#222"/>
<circle cx="781.2" cy="402.5" r="0.75" fill="#222"/>
<circle cx="691.2" cy="475" r="0.38" fill="#222"/>
<circle cx="858.8" cy="624.5" r="0.75" fill="#222"/>
<circle cx="905" cy="640.5" r="1.12" fill="#222"/>
<circle cx="892" cy="625.8" r="0.56" fill="#222"/>
<circle cx="933.2" cy="788" r="0.75" fill="#222"/>
<circle cx="921" cy="791" r="0.56" fill="#222"/>
<circle cx="970.8" cy="769" r="0.94" fill="#222"/>
<circle cx="963.8" cy="780.5" r="0.94" fill="#222"/>
<circle cx="851.2" cy="782.2" r="0.75" fill="#222"/>
<circle cx="786.8" cy="840" r="1.12" fill="#222"/>
<circle cx="802.5" cy="842.5" r="1.31" fill="#222"/>
<circle cx="803.8" cy="837" r="0.75" fill="#222"/>
<circle cx="808.8" cy="837.5" r="0.38" fill="#222"/>
<circle cx="811.2" cy="847" r="0.75" fill="#222"/>
<circle cx="565.4" cy="691.4" r="0.75" fill="#222"/>
<circle cx="563.4" cy="699.4" r="0.45" fill="#222"/>
<circle cx="570.6" cy="776" r="0.45" fill="#222"/>
<circle cx="641" cy="755" r="0.6" fill="#222"/>
<circle cx="626" cy="595" r="0.9" fill="#222"/>
<circle cx="629" cy="599" r="1.2" fill="#222"/>
<circle cx="631.6" cy="603" r="0.9" fill="#222"/>
<circle cx="634" cy="607" r="0.6" fill="#222"/>
<circle cx="637" cy="611" r="0.6" fill="#222"/>
<circle cx="641" cy="616" r="0.6" fill="#222"/>
<circle cx="646" cy="623" r="0.6" fill="#222"/>
<circle cx="841" cy="995" r="1.2" fill="#222"/>
<circle cx="825" cy="1023" r="2" fill="#222"/>
<circle cx="812" cy="1021" r="1" fill="#222"/></g></svg>
<!-- attribute table -->
<span class="t" style="left:1337px;top:133.7px;font-size:15px;line-height:17px;letter-spacing:-0.217px;">Reg01012018_WGS84 :: Totale degli elementi: 20, Filtrati: 20, Selezionati: 0</span>
<svg class="a" style="left:1339.5px;top:157.5px" width="17" height="17" viewBox="0 0 24 24"><path d="M5 23L6.5 17L15 3L19.5 5.5L10 20.5z" fill="#f2d43a" stroke="#b89a14" stroke-width=".9"/><path d="M5 23L6.5 17L10 20.5z" fill="#e8dfc0" stroke="#b89a14" stroke-width=".7"/><path d="M5 23l.600-2.400 1.700 1.500z" fill="#444"/></svg><svg class="a" style="left:1364.5px;top:157.5px" width="17" height="17" viewBox="0 0 24 24"><rect x="2" y="3" width="19" height="5" fill="#e0ded6" stroke="#d2d0c8" stroke-width=".8"/><rect x="2" y="10" width="19" height="5" fill="#e0ded6" stroke="#d2d0c8" stroke-width=".8"/><rect x="2" y="17" width="19" height="5" fill="#e0ded6" stroke="#d2d0c8" stroke-width=".8"/><path d="M8 23L9.5 17L17 2L21.5 4.5L13 20.5z" fill="#e6e3df" stroke="#c9c5c0" stroke-width=".9"/><path d="M8 23L9.5 17L13 20.5z" fill="#efedea" stroke="#c9c5c0" stroke-width=".7"/><path d="M8 23l.600-2.400 1.700 1.500z" fill="#bbb"/></svg><svg class="a" style="left:1389.5px;top:157.5px" width="17" height="17" viewBox="0 0 24 24"><rect x="2" y="1.5" width="20" height="21" rx="2" fill="#e2e0dd" stroke="#d0cdc8" stroke-width="1.3"/><rect x="5.5" y="2" width="13" height="9.5" fill="#f1f0ee"/><path d="M7 4.5h10M7 6.8h10M7 9.1h10" stroke="#d6d4d0" stroke-width="1"/><rect x="6.5" y="14.5" width="11" height="7.5" fill="#efeeec"/><rect x="8.5" y="16" width="3" height="5" fill="#d4d2ce"/><path d="M12 22l2-5 7-7 2.500 2.500-7 7z" fill="#e2dedb" stroke="#d2cec9" stroke-width=".8"/></svg><svg class="a" style="left:1415.5px;top:157.5px" width="17" height="17" viewBox="0 0 24 24"><path d="M3 11C3 5 8 2 12.500 2c3 0 5 1.300 6.500 3l2.500-2.500V10h-7.500l2.500-2.500C15.500 6.500 14 6 12.500 6 9.500 6 7.500 8 7 11z" fill="#4d8fd6" stroke="#2f6db5" stroke-width=".8"/><path d="M21 13c0 6-5 9-9.500 9-3 0-5-1.300-6.500-3L2.500 21.500V14H10l-2.500 2.500C8.500 17.500 10 18 11.500 18c3 0 5-2 5.500-5z" fill="#4d8fd6" stroke="#2f6db5" stroke-width=".8"/></svg><svg class="a" style="left:1448.5px;top:157.5px" width="17" height="17" viewBox="0 0 24 24"><path d="M2 6C3 2 7 2 10 3s6 1 9-.500c3-1 4 3 3 6-1 2-4 2-7 2s-4 3-7 3C4 13 1 10 2 6z" fill="#dcdedb" stroke="#cfd1ce" stroke-width="1"/><rect x="12" y="12" width="11" height="11" rx="1.8" fill="#d6d3cd"/><path d="M13.54 17.5H21.46M17.5 13.54V21.46M14.6488 14.6488L20.3512 20.3512M20.3512 14.6488L14.6488 20.3512" stroke="#fff" stroke-width="1.5"/><circle cx="17.5" cy="17.5" r="1.2" fill="#d6d3cd"/></svg><svg class="a" style="left:1473.5px;top:157.5px" width="17" height="17" viewBox="0 0 24 24"><path d="M4 6h16M9 6V3.500h6V6" fill="none" stroke="#dccfcf" stroke-width="1.600"/><path d="M5.500 8h13l-1 14h-11z" fill="#f1ecec" stroke="#dccfcf" stroke-width="1.500"/><path d="M9.500 11v8M12 11v8M14.500 11v8" stroke="#dccfcf" stroke-width="1.300"/></svg><svg class="a" style="left:1498.5px;top:157.5px" width="17" height="17" viewBox="0 0 24 24"><path d="M2 5l15 9M2 11l15-5" stroke="#d4d2ce" stroke-width="1.600"/><ellipse cx="19" cy="6.500" rx="3" ry="2.200" transform="rotate(-25 19 6.500)" fill="none" stroke="#dccaca" stroke-width="1.400"/><ellipse cx="19" cy="15.500" rx="3" ry="2.200" transform="rotate(30 19 15.500)" fill="none" stroke="#dccaca" stroke-width="1.400"/></svg><svg class="a" style="left:1522.5px;top:157.5px" width="17" height="17" viewBox="0 0 24 24"><path d="M8 1h7l5 5v11h-12z" fill="#f6f6f6" stroke="#d2d2d2" stroke-width="1.2"/><path d="M15 1v5h5" fill="#e8e8e8" stroke="#d2d2d2" stroke-width="1"/><path d="M3 6h7l5 5v12h-12z" fill="#f8f8f8" stroke="#cfcfcf" stroke-width="1.2"/><path d="M10 6v5h5" fill="#e8e8e8" stroke="#cfcfcf" stroke-width="1"/><path d="M5.500 14h7M5.500 16.500h7M5.500 19h7" stroke="#dadada" stroke-width="1"/></svg><svg class="a" style="left:1547.5px;top:157.5px" width="17" height="17" viewBox="0 0 24 24"><rect x="3.500" y="3" width="17" height="20" rx="1.500" fill="#ece9e4" stroke="#d3cfc9" stroke-width="1.200"/><rect x="8" y="1" width="8" height="4.500" rx="1" fill="#e1ded9" stroke="#d3cfc9"/><rect x="6" y="7.500" width="12" height="13.500" fill="#f8f8f8" stroke="#d9d9d9" stroke-width=".8"/><path d="M8 11h8M8 13.500h8M8 16h8" stroke="#dcdcdc" stroke-width="1"/></svg><div class="a" style="left:1440px;top:161px;width:1px;height:11px;background:#c2c2c2"></div><div class="a" style="left:1573px;top:161px;width:1px;height:11px;background:#c2c2c2"></div><div class="a" style="left:1781px;top:161px;width:1px;height:11px;background:#c2c2c2"></div><div class="a" style="left:1864px;top:161px;width:1px;height:11px;background:#c2c2c2"></div><svg class="a" style="left:1582px;top:156px" width="18" height="18" viewBox="0 0 18 18"><rect x="7.500" y="8" width="9" height="8.500" rx="1" fill="#fce94f" stroke="#c4a000"/><text x="0" y="11" font-family="Liberation Serif,serif" font-size="18" fill="#5c2072">ε</text></svg><svg class="a" style="left:1606.5px;top:157.5px" width="17" height="17" viewBox="0 0 24 24"><rect x="3" y="2" width="19" height="5" fill="#fce94f" stroke="#c4a000"/><rect x="3" y="9.500" width="19" height="5" fill="#fce94f" stroke="#c4a000"/><rect x="3" y="17" width="19" height="5" fill="#fce94f" stroke="#c4a000"/></svg><svg class="a" style="left:1632px;top:158px" width="17" height="17" viewBox="0 0 17 17"><rect x="1.500" y="1.500" width="14" height="14" fill="#f4f4f4" stroke="#c4a000"/><path d="M1.500 1.500v14h14z" fill="#fce94f" stroke="#c4a000"/></svg><svg class="a" style="left:1656.5px;top:157.5px" width="17" height="17" viewBox="0 0 24 24"><rect x="2.500" y="2.500" width="13" height="13" fill="#fce94f" stroke="#c4a000"/><rect x="14" y="14" width="9.500" height="9.500" rx="2" fill="#e8323a"/><circle cx="18.750" cy="18.750" r="3" fill="#fff"/><path d="M16.800 20.700l3.900-3.900" stroke="#e8323a" stroke-width="1.500"/></svg><svg class="a" style="left:1682px;top:158px" width="16" height="16" viewBox="0 0 16 16"><path d="M1 1.500h14L9.500 8v7L6.500 13V8z" fill="#6d9bd1" stroke="#3a6ea5" stroke-width=".9"/><path d="M1 1h14v2.200H1z" fill="#f4d83c" stroke="#c4a000" stroke-width=".6"/></svg><svg class="a" style="left:1706px;top:158px" width="17" height="17" viewBox="0 0 17 17"><rect x="1.500" y="1.500" width="14" height="14" fill="#6d9bd1" stroke="#3a6ea5"/><rect x="3.500" y="3" width="10" height="3" fill="#fce94f"/><path d="M8.500 7l3 3.500h-2V14h-2v-3.500h-2z" fill="#fff"/></svg><svg class="a" style="left:1731.5px;top:157.5px" width="17" height="17" viewBox="0 0 24 24"><rect x="3" y="3" width="12" height="12" fill="#fce94f" stroke="#c4a000"/><path d="M12 0l4.5 5h-3v4h-3V5h-3zM12 24l4.500-5h-3v-4h-3v4h-3zM0 12l5-4.500v3h4v3H5v3zM24 12l-5-4.500v3h-4v3h4v3z" fill="#6d9bd1" stroke="#3a6ea5" stroke-width=".8"/><rect x="9" y="9" width="6" height="6" fill="#fce94f"/></svg><svg class="a" style="left:1756.5px;top:157.5px" width="17" height="17" viewBox="0 0 24 24"><rect x="4" y="3" width="9" height="10" fill="#fce94f" stroke="#c4a000"/><path d="M9.600000000000001 14.399999999999999L3.1000000000000014 20.9" stroke="#222" stroke-width="4.2" stroke-linecap="butt"/><path d="M8.400000000000002 15.599999999999998L3.6000000000000014 20.4" stroke="#f3c52d" stroke-width="2.4"/><circle cx="15" cy="9" r="7.5" fill="#f3efd9" stroke="#555" stroke-width="1.5"/><path d="M15 1.500a7.500 7.500 0 0 1 0 15z" fill="#fbfbfb"/></svg><svg class="a" style="left:1789.5px;top:157.5px" width="17" height="17" viewBox="0 0 24 24"><path d="M8 1h7l5 5v11h-12z" fill="#f6f6f6" stroke="#d2d2d2" stroke-width="1.2"/><path d="M15 1v5h5" fill="#e8e8e8" stroke="#d2d2d2" stroke-width="1"/><path d="M3 6h7l5 5v12h-12z" fill="#f8f8f8" stroke="#cfcfcf" stroke-width="1.2"/><path d="M10 6v5h5" fill="#e8e8e8" stroke="#cfcfcf" stroke-width="1"/><path d="M5.500 14h7M5.500 16.500h7M5.500 19h7" stroke="#dadada" stroke-width="1"/></svg><svg class="a" style="left:1814.5px;top:157.5px" width="17" height="17" viewBox="0 0 24 24"><rect x="3.500" y="3" width="17" height="20" rx="1.500" fill="#ece9e4" stroke="#d3cfc9" stroke-width="1.200"/><rect x="8" y="1" width="8" height="4.500" rx="1" fill="#e1ded9" stroke="#d3cfc9"/><rect x="6" y="7.500" width="12" height="13.500" fill="#f8f8f8" stroke="#d9d9d9" stroke-width=".8"/><path d="M8 11h8M8 13.500h8M8 16h8" stroke="#dcdcdc" stroke-width="1"/></svg><div class="a" style="left:1836px;top:155px;width:24px;height:23px;background:#fbfbfb;border:1px solid #adadad;border-radius:3px"></div><svg class="a" style="left:1839.5px;top:157.5px" width="17" height="17" viewBox="0 0 24 24"><path d="M3 2v19M21 2v19" stroke="#777" stroke-width="1.400"/><path d="M2 22h20" stroke="#777" stroke-width="2"/><path d="M3 5.500h18M3 11h18M3 16.500h18" stroke="#888" stroke-width=".9"/><rect x="7" y="3.5" width="4" height="4" transform="rotate(45 9 5.5)" fill="#ee6a6a" stroke="#c33" stroke-width=".8"/><rect x="14.5" y="3.5" width="4" height="4" transform="rotate(45 16.5 5.5)" fill="#ee6a6a" stroke="#c33" stroke-width=".8"/><rect x="5" y="9" width="4" height="4" transform="rotate(45 7 11)" fill="#9fd7a0" stroke="#5a5" stroke-width=".8"/><rect x="9.5" y="9" width="4" height="4" transform="rotate(45 11.5 11)" fill="#9fd7a0" stroke="#5a5" stroke-width=".8"/><rect x="8" y="14.5" width="4" height="4" transform="rotate(45 10 16.5)" fill="#9cc0e6" stroke="#58b" stroke-width=".8"/><rect x="12.5" y="14.5" width="4" height="4" transform="rotate(45 14.5 16.5)" fill="#9cc0e6" stroke="#58b" stroke-width=".8"/><rect x="17" y="14.5" width="4" height="4" transform="rotate(45 19 16.5)" fill="#9cc0e6" stroke="#58b" stroke-width=".8"/></svg><svg class="a" style="left:1872px;top:158px" width="17" height="17" viewBox="0 0 17 17"><rect x="1" y="1.500" width="15" height="3.800" rx="1" fill="#fff" stroke="#aaa" stroke-width=".7"/><path d="M8 3.400h5" stroke="#666" stroke-width="1"/><rect x="1" y="6.600" width="15" height="3.800" rx="1" fill="#c9ecc9" stroke="#7fbf83" stroke-width=".7"/><path d="M3.500 8.500h10" stroke="#58a55c" stroke-width="1.200"/><rect x="1" y="11.700" width="15" height="3.800" rx="1" fill="#fff" stroke="#aaa" stroke-width=".7"/><path d="M3.500 13.600h5" stroke="#e24a4a" stroke-width="1.200"/></svg><span class="t" style="left:1904px;top:156px;font-size:17px;line-height:17px">»</span><svg class="a" style="left:1893px;top:136px" width="11" height="11" viewBox="0 0 11 11"><rect x=".500" y=".500" width="10" height="10" rx="2" fill="#f6f6f6" stroke="#4a4a4a" stroke-width="1.200"/><rect x="2.500" y="4" width="4" height="4" fill="none" stroke="#4a4a4a" stroke-width="1"/><path d="M4.500 4V2.500h4v4H6.500" fill="none" stroke="#4a4a4a" stroke-width="1"/></svg><svg class="a" style="left:1907px;top:136px" width="11" height="11" viewBox="0 0 11 11"><rect x=".500" y=".500" width="10" height="10" rx="2" fill="#f6f6f6" stroke="#4a4a4a" stroke-width="1.200"/><path d="M3 3l5 5M8 3l-5 5" stroke="#333" stroke-width="1.700"/></svg><div class="a" style="left:1336px;top:1019px;width:175px;height:26px;background:#f6f6f6;border:1px solid #adadad;border-radius:2px"></div><svg class="a" style="left:1342px;top:1023px" width="16" height="16" viewBox="0 0 16 16"><path d="M1 1.500h14L9.500 8v7L6.500 13V8z" fill="#6d9bd1" stroke="#3a6ea5" stroke-width=".9"/><path d="M1 1h14v2.200H1z" fill="#f4d83c" stroke="#c4a000" stroke-width=".6"/></svg><span class="t" style="left:1365px;top:1025px;font-size:13.5px;line-height:16px;letter-spacing:-0.117px;">Mostra tutti gli elementi</span><svg class="a" style="left:1500px;top:1036px" width="8" height="5"><path d="M0 0h8L4 5z" fill="#444"/></svg><svg class="a" style="left:1866px;top:1022px" width="18" height="18" viewBox="0 0 18 18"><rect x=".500" y=".500" width="17" height="17" fill="#eaf2fb" stroke="#9fc0e6"/><rect x="7" y="3" width="8" height="4" rx="1" fill="#fff" stroke="#557"/><rect x="7" y="10.500" width="8" height="4" rx="1" fill="#fff" stroke="#557"/><path d="M3 2v11h4M3 5h4" fill="none" stroke="#557" stroke-width=".9"/></svg><div class="a" style="left:1889px;top:1018px;width:28px;height:27px;background:#e1e1e1;border:1px solid #adadad;border-radius:2px"></div><svg class="a" style="left:1894px;top:1022px" width="18" height="18" viewBox="0 0 18 18"><rect x=".500" y=".500" width="17" height="17" fill="#eaf2fb" stroke="#7ea3d3"/><rect x="1" y="1" width="16" height="4" fill="#a9c6ea"/><path d="M3 8h3M8 8h7M3 11h3M8 11h7M3 14h3M8 14h7" stroke="#5d8bc7" stroke-width="1.200"/></svg>
<div class="a" style="left:1333px;top:182px;width:587px;height:836px;background:#fff;border:1px solid #a0a0a0;border-right:none;overflow:hidden"><div class="a" style="left:0;top:0;width:22px;height:836px;background:#f0f0f0"></div><div class="a" style="left:0;top:0;width:587px;height:24px;background:#f5f5f5"></div><div class="th" style="left:0px;width:147px;padding-left:22px;letter-spacing:-1.213px">COD_RIP</div><div class="th" style="left:147px;width:125px;padding-left:0px;letter-spacing:-1.63px">COD_REG</div><div class="th" style="left:272px;width:125px;padding-left:0px;letter-spacing:-1.503px">DEN_REG</div><div class="th" style="left:397px;width:156px;padding-left:0px;letter-spacing:-0.543px">J_field_3</div><div class="tr" style="top:24px"><div class="n" style="letter-spacing:-0.5px">1</div><div style="left:23px;width:124px;background:#fff;text-align:right;padding-right:3.5px">4</div><div style="left:147px;width:125px;background:#fff;text-align:right;padding-right:3.5px;letter-spacing:-0.4px">17</div><div style="left:272px;width:125px;background:#fff;padding-left:3px;letter-spacing:-0.077px">Basilicata</div><div style="left:397px;width:156px;background:#fff;padding-left:3px;letter-spacing:-0.47px">48,218,227,255</div></div><div class="tr" style="top:61px"><div class="n" style="letter-spacing:-0.5px">2</div><div style="left:23px;width:124px;background:#e9e7e3;text-align:right;padding-right:3.5px">3</div><div style="left:147px;width:125px;background:#e9e7e3;text-align:right;padding-right:3.5px;letter-spacing:-0.4px">12</div><div style="left:272px;width:125px;background:#e9e7e3;padding-left:3px;letter-spacing:-0.215px">Lazio</div><div style="left:397px;width:156px;background:#e9e7e3;padding-left:3px;letter-spacing:-0.47px">179,235,59,255</div></div><div class="tr" style="top:98px"><div class="n" style="letter-spacing:-0.5px">3</div><div style="left:23px;width:124px;background:#fff;text-align:right;padding-right:3.5px">4</div><div style="left:147px;width:125px;background:#fff;text-align:right;padding-right:3.5px;letter-spacing:-0.4px">13</div><div style="left:272px;width:125px;background:#fff;padding-left:3px;letter-spacing:0.079px">Abruzzo</div><div style="left:397px;width:156px;background:#fff;padding-left:3px;letter-spacing:-0.47px">232,193,76,255</div></div><div class="tr" style="top:135px"><div class="n" style="letter-spacing:-0.5px">4</div><div style="left:23px;width:124px;background:#e9e7e3;text-align:right;padding-right:3.5px">1</div><div style="left:147px;width:125px;background:#e9e7e3;text-align:right;padding-right:3.5px;letter-spacing:-0.4px">3</div><div style="left:272px;width:125px;background:#e9e7e3;padding-left:3px;letter-spacing:0.14px">Lombardia</div><div style="left:397px;width:156px;background:#e9e7e3;padding-left:3px;letter-spacing:-0.47px">18,39,233,255</div></div><div class="tr" style="top:172px"><div class="n" style="letter-spacing:-0.5px">5</div><div style="left:23px;width:124px;background:#fff;text-align:right;padding-right:3.5px">3</div><div style="left:147px;width:125px;background:#fff;text-align:right;padding-right:3.5px;letter-spacing:-0.4px">11</div><div style="left:272px;width:125px;background:#fff;padding-left:3px;letter-spacing:-0.143px">Marche</div><div style="left:397px;width:156px;background:#fff;padding-left:3px;letter-spacing:-0.47px">120,204,137,255</div></div><div class="tr" style="top:209px"><div class="n" style="letter-spacing:-0.5px">6</div><div style="left:23px;width:124px;background:#e9e7e3;text-align:right;padding-right:3.5px">4</div><div style="left:147px;width:125px;background:#e9e7e3;text-align:right;padding-right:3.5px;letter-spacing:-0.4px">14</div><div style="left:272px;width:125px;background:#e9e7e3;padding-left:3px;letter-spacing:0.251px">Molise</div><div style="left:397px;width:156px;background:#e9e7e3;padding-left:3px;letter-spacing:-0.47px">231,108,155,255</div></div><div class="tr" style="top:246px"><div class="n" style="letter-spacing:-0.5px">7</div><div style="left:23px;width:124px;background:#fff;text-align:right;padding-right:3.5px">1</div><div style="left:147px;width:125px;background:#fff;text-align:right;padding-right:3.5px;letter-spacing:-0.4px">2</div><div style="left:272px;width:125px;background:#fff;padding-left:3px;letter-spacing:0.036px">Valle d'Aosta</div><div style="left:397px;width:156px;background:#fff;padding-left:3px;letter-spacing:-0.47px">98,66,238,255</div></div><div class="tr" style="top:283px"><div class="n" style="letter-spacing:-0.5px">8</div><div style="left:23px;width:124px;background:#e9e7e3;text-align:right;padding-right:3.5px">1</div><div style="left:147px;width:125px;background:#e9e7e3;text-align:right;padding-right:3.5px;letter-spacing:-0.4px">7</div><div style="left:272px;width:125px;background:#e9e7e3;padding-left:3px;letter-spacing:-0.005px">Liguria</div><div style="left:397px;width:156px;background:#e9e7e3;padding-left:3px;letter-spacing:-0.47px">219,21,209,255</div></div><div class="tr" style="top:320px"><div class="n" style="letter-spacing:-0.5px">9</div><div style="left:23px;width:124px;background:#fff;text-align:right;padding-right:3.5px">4</div><div style="left:147px;width:125px;background:#fff;text-align:right;padding-right:3.5px;letter-spacing:-0.4px">15</div><div style="left:272px;width:125px;background:#fff;padding-left:3px;letter-spacing:-0.196px">Campania</div><div style="left:397px;width:156px;background:#fff;padding-left:3px;letter-spacing:-0.47px">163,225,124,255</div></div><div class="tr" style="top:357px"><div class="n" style="letter-spacing:-0.5px">10</div><div style="left:23px;width:124px;background:#e9e7e3;text-align:right;padding-right:3.5px">3</div><div style="left:147px;width:125px;background:#e9e7e3;text-align:right;padding-right:3.5px;letter-spacing:-0.4px">10</div><div style="left:272px;width:125px;background:#e9e7e3;padding-left:3px;letter-spacing:0.192px">Umbria</div><div style="left:397px;width:156px;background:#e9e7e3;padding-left:3px;letter-spacing:-0.47px">160,107,220,255</div></div><div class="tr" style="top:394px"><div class="n" style="letter-spacing:-0.5px">11</div><div style="left:23px;width:124px;background:#fff;text-align:right;padding-right:3.5px">1</div><div style="left:147px;width:125px;background:#fff;text-align:right;padding-right:3.5px;letter-spacing:-0.4px">1</div><div style="left:272px;width:125px;background:#fff;padding-left:3px;letter-spacing:0.033px">Piemonte</div><div style="left:397px;width:156px;background:#fff;padding-left:3px;letter-spacing:-0.47px">237,177,124,255</div></div><div class="tr" style="top:431px"><div class="n" style="letter-spacing:-0.5px">12</div><div style="left:23px;width:124px;background:#e9e7e3;text-align:right;padding-right:3.5px">3</div><div style="left:147px;width:125px;background:#e9e7e3;text-align:right;padding-right:3.5px;letter-spacing:-0.4px">9</div><div style="left:272px;width:125px;background:#e9e7e3;padding-left:3px;letter-spacing:-0.395px">Toscana</div><div style="left:397px;width:156px;background:#e9e7e3;padding-left:3px;letter-spacing:-0.47px">239,110,81,255</div></div><div class="tr" style="top:468px"><div class="n" style="letter-spacing:-0.5px">13</div><div style="left:23px;width:124px;background:#fff;text-align:right;padding-right:3.5px">4</div><div style="left:147px;width:125px;background:#fff;text-align:right;padding-right:3.5px;letter-spacing:-0.4px">16</div><div style="left:272px;width:125px;background:#fff;padding-left:3px;letter-spacing:-0.079px">Puglia</div><div style="left:397px;width:156px;background:#fff;padding-left:3px;letter-spacing:-0.47px">63,175,231,255</div></div><div class="tr" style="top:505px"><div class="n" style="letter-spacing:-0.5px">14</div><div style="left:23px;width:124px;background:#e9e7e3;text-align:right;padding-right:3.5px">4</div><div style="left:147px;width:125px;background:#e9e7e3;text-align:right;padding-right:3.5px;letter-spacing:-0.4px">18</div><div style="left:272px;width:125px;background:#e9e7e3;padding-left:3px;letter-spacing:-0.052px">Calabria</div><div style="left:397px;width:156px;background:#e9e7e3;padding-left:3px;letter-spacing:-0.47px">224,59,169,255</div></div><div class="tr" style="top:542px"><div class="n" style="letter-spacing:-0.5px">15</div><div style="left:23px;width:124px;background:#fff;text-align:right;padding-right:3.5px">2</div><div style="left:147px;width:125px;background:#fff;text-align:right;padding-right:3.5px;letter-spacing:-0.4px">6</div><div style="left:272px;width:125px;background:#fff;padding-left:3px;letter-spacing:-0.153px">Friuli Venezia Gi…</div><div style="left:397px;width:156px;background:#fff;padding-left:3px;letter-spacing:-0.47px">68,239,48,255</div></div><div class="tr" style="top:579px"><div class="n" style="letter-spacing:-0.5px">16</div><div style="left:23px;width:124px;background:#e9e7e3;text-align:right;padding-right:3.5px">2</div><div style="left:147px;width:125px;background:#e9e7e3;text-align:right;padding-right:3.5px;letter-spacing:-0.4px">5</div><div style="left:272px;width:125px;background:#e9e7e3;padding-left:3px;letter-spacing:-0.062px">Veneto</div><div style="left:397px;width:156px;background:#e9e7e3;padding-left:3px;letter-spacing:-0.47px">34,233,131,255</div></div><div class="tr" style="top:616px"><div class="n" style="letter-spacing:-0.5px">17</div><div style="left:23px;width:124px;background:#fff;text-align:right;padding-right:3.5px">2</div><div style="left:147px;width:125px;background:#fff;text-align:right;padding-right:3.5px;letter-spacing:-0.4px">4</div><div style="left:272px;width:125px;background:#fff;padding-left:3px;letter-spacing:0.294px">Trentino-Alto A…</div><div style="left:397px;width:156px;background:#fff;padding-left:3px;letter-spacing:-0.47px">50,235,192,255</div></div><div class="tr" style="top:653px"><div class="n" style="letter-spacing:-0.5px">18</div><div style="left:23px;width:124px;background:#e9e7e3;text-align:right;padding-right:3.5px">2</div><div style="left:147px;width:125px;background:#e9e7e3;text-align:right;padding-right:3.5px;letter-spacing:-0.4px">8</div><div style="left:272px;width:125px;background:#e9e7e3;padding-left:3px;letter-spacing:0.048px">Emilia-Romagna</div><div style="left:397px;width:156px;background:#e9e7e3;padding-left:3px;letter-spacing:-0.47px">162,15,210,255</div></div><div class="tr" style="top:690px"><div class="n" style="letter-spacing:-0.5px">19</div><div style="left:23px;width:124px;background:#fff;text-align:right;padding-right:3.5px">5</div><div style="left:147px;width:125px;background:#fff;text-align:right;padding-right:3.5px;letter-spacing:-0.4px">20</div><div style="left:272px;width:125px;background:#fff;padding-left:3px;letter-spacing:-0.208px">Sardegna</div><div style="left:397px;width:156px;background:#fff;padding-left:3px;letter-spacing:-0.47px">210,214,92,255</div></div><div class="tr" style="top:727px"><div class="n" style="letter-spacing:-0.5px">20</div><div style="left:23px;width:124px;background:#e9e7e3;text-align:right;padding-right:3.5px">5</div><div style="left:147px;width:125px;background:#e9e7e3;text-align:right;padding-right:3.5px;letter-spacing:-0.4px">19</div><div style="left:272px;width:125px;background:#e9e7e3;padding-left:3px;letter-spacing:0.02px">Sicilia</div><div style="left:397px;width:156px;background:#e9e7e3;padding-left:3px;letter-spacing:-0.47px">234,16,38,255</div></div></div>
<!-- status bar -->
<div class="inp" style="left:4px;top:1052px;width:309px;height:24px;border-radius:3px"></div><svg class="a" style="left:11px;top:1058px" width="13" height="13" viewBox="0 0 13 13"><circle cx="5" cy="5" r="3.800" fill="none" stroke="#777" stroke-width="1.200"/><path d="M8 8l4 4" stroke="#777" stroke-width="1.500"/></svg><span class="t" style="left:33px;top:1057px;font-size:13.5px;line-height:16px;letter-spacing:-0.258px;color:#6d6d6d">Digita per localizzare (Ctrl+K)</span><span class="t" style="left:321.5px;top:1057px;font-size:13.5px;line-height:16px;letter-spacing:-0.284px;">1 voce in legenda eliminata.</span><span class="t" style="left:912px;top:1057px;font-size:13.5px;line-height:16px;letter-spacing:-0.382px;">Coordinate</span><div class="inp" style="left:977px;top:1053px;width:112px;height:23px;padding:1px 0 0 7px;letter-spacing:-0.5px">859945,4633154</div><svg class="a" style="left:1092px;top:1054px" width="20" height="20" viewBox="0 0 20 20"><ellipse cx="8" cy="8" rx="4.500" ry="6.500" transform="rotate(-25 8 8)" fill="#ddd" stroke="#111" stroke-width="1.400"/><path d="M6 3l4 9M4 7l7-2" stroke="#111" stroke-width="1.100"/><circle cx="13" cy="14" r="3.500" fill="#fff" stroke="#111" stroke-width="1.500"/><circle cx="13" cy="14" r="1.200" fill="#111"/><path d="M14 3l2-1M16 5l2-.500" stroke="#111" stroke-width=".9"/></svg><span class="t" style="left:1126.5px;top:1057px;font-size:13.5px;line-height:16px;letter-spacing:-0.818px;">Scala</span><div class="inp" style="left:1160px;top:1053px;width:93px;height:23px;padding:1px 0 0 4px;letter-spacing:-0.25px">1:6982924</div><div class="a" style="left:1226px;top:1054px;width:26px;height:21px;background:linear-gradient(#f4f4f4,#e9e9e9)"></div><svg class="a" style="left:1233.5px;top:1062px" width="9" height="5" viewBox="0 0 9 5"><path d="M0 0h9L4.500 5z" fill="#4d4d4d"/></svg><svg class="a" style="left:1264px;top:1054px" width="17" height="20" viewBox="0 0 17 20"><path d="M4 9V6a4.500 4.500 0 0 1 9 0v3" fill="none" stroke="#8a8a8a" stroke-width="2"/><rect x="1.500" y="9" width="14" height="10" rx="1.500" fill="#777"/></svg><span class="t" style="left:1290px;top:1057px;font-size:13.5px;line-height:16px;letter-spacing:-0.259px;">Lente d'ingrandimento</span><div class="inp" style="left:1420px;top:1053px;width:92px;height:23px;padding:1px 0 0 4px">100%</div><svg class="a" style="left:1497px;top:1056px" width="10" height="17" viewBox="0 0 10 17"><path d="M1 6.500l4-5 4 5zM1 10.500l4 5 4-5z" fill="#444"/></svg><span class="t" style="left:1522.5px;top:1057px;font-size:13.5px;line-height:16px;letter-spacing:-0.561px;">Rotazione</span><div class="inp" style="left:1587px;top:1053px;width:89px;height:23px;padding:1px 0 0 4px">0,0 °</div><svg class="a" style="left:1661px;top:1056px" width="10" height="17" viewBox="0 0 10 17"><path d="M1 6.500l4-5 4 5zM1 10.500l4 5 4-5z" fill="#444"/></svg><div class="cb" style="left:1682px;top:1056px"><svg width="14" height="14" viewBox="0 0 14 14"><path d="M2.200 7.200 L5.400 11.200 L11.600 2.200" fill="none" stroke="#000" stroke-width="2.100"/></svg></div><span class="t" style="left:1705px;top:1057px;font-size:13.5px;line-height:16px;letter-spacing:-0.437px;">Visualizza</span><svg class="a" style="left:1778px;top:1054px" width="21" height="20" viewBox="0 0 21 20"><ellipse cx="10.500" cy="9" rx="9" ry="7.500" fill="#f4f4f4" stroke="#555" stroke-width="1"/><path d="M1.500 9h18M10.500 1.500v15M4 4.500c4 1.500 9 1.500 13 0M4 13.500c4-1.500 9-1.500 13 0M10.500 1.500c-4 3.500-4 11.500 0 15M10.500 1.500c4 3.500 4 11.500 0 15" fill="none" stroke="#555" stroke-width=".8"/><path d="M8 19l2.500-3 2.500 3z" fill="#555"/></svg><span class="t" style="left:1802px;top:1057px;font-size:13.5px;line-height:16px;letter-spacing:-0.911px;">EPSG:32632</span><svg class="a" style="left:1892px;top:1054px" width="22" height="21" viewBox="0 0 22 21"><path d="M11 1c5.500 0 10 3.300 10 8s-4.500 8-10 8c-1 0-2-.100-3-.400L3 20l1.500-5C2.500 13.500 1 11.500 1 9c0-4.700 4.500-8 10-8z" fill="#555"/><circle cx="6.500" cy="9" r="1.500" fill="#fff"/><circle cx="11" cy="9" r="1.500" fill="#fff"/><circle cx="15.500" cy="9" r="1.500" fill="#fff"/></svg>
<div class="a" style="left:0;top:1078px;width:1920px;height:2px;background:#262626"></div><div class="a" style="left:323px;top:1078px;width:45px;height:2px;background:#585858"></div>
</body></html>
